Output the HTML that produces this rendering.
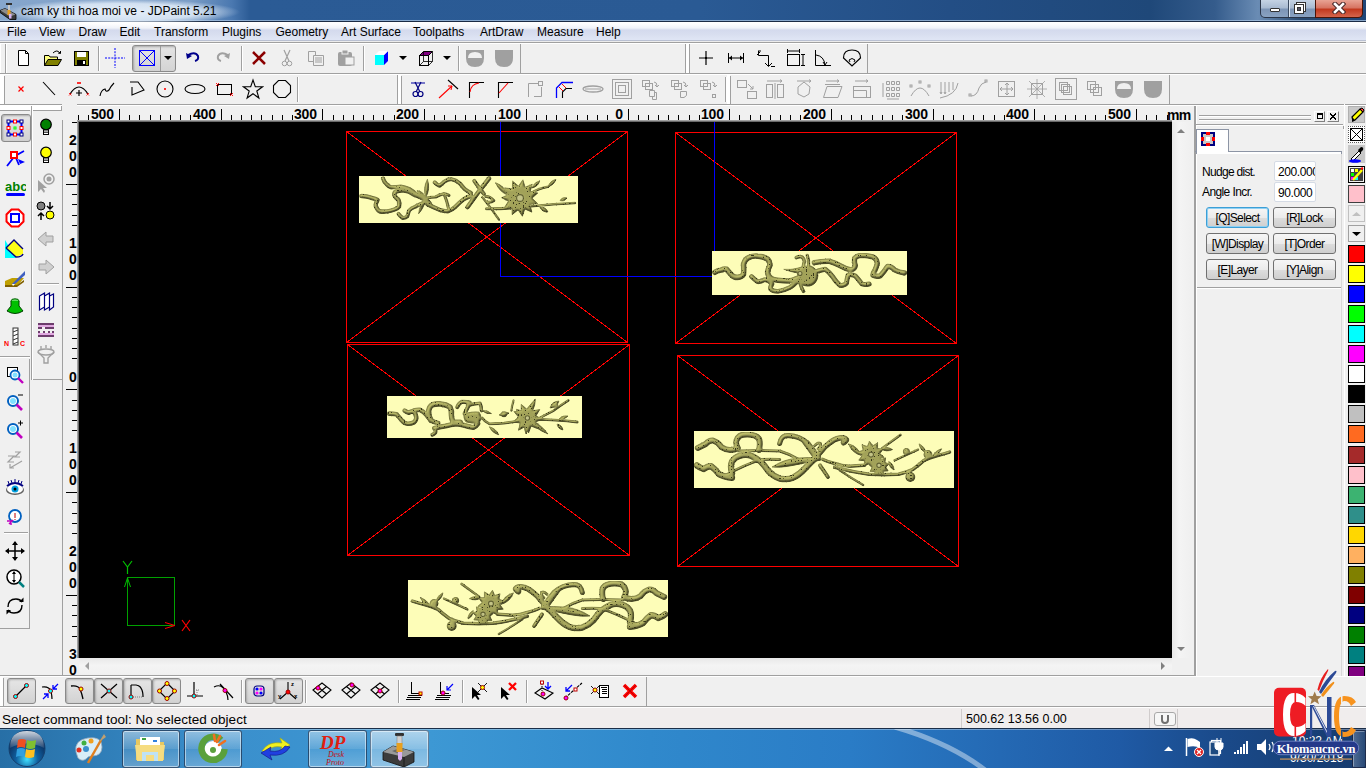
<!DOCTYPE html><html><head><meta charset="utf-8"><style>
html,body{margin:0;padding:0;width:1366px;height:768px;overflow:hidden;background:#f0f0f0;}
body{position:relative;font-family:"Liberation Sans", sans-serif;}
div,svg{box-sizing:border-box;}
</style></head><body>
<div style="position:absolute;left:0px;top:0px;width:1366px;height:22px;background:linear-gradient(90deg,#86a6cc 0px,#7b9dc6 190px,#4a78b0 232px,#2b5b95 250px,#2a5a94 700px,#234e85 950px,#1f4879 1150px,#355c8c 1215px,#6a8cb4 1258px,#2a4a70 1300px,#1f4678 1366px);"></div>
<div style="position:absolute;left:0px;top:20px;width:1366px;height:1px;background:rgba(170,196,226,0.75);"></div>
<div style="position:absolute;left:0px;top:21px;width:1366px;height:1px;background:#1b2b45;"></div>
<div style="position:absolute;left:0px;top:0px;width:250px;height:22px;background:radial-gradient(ellipse 118px 13px at 122px 12px,rgba(238,245,252,0.92) 0%,rgba(225,236,248,0.85) 65%,rgba(190,212,236,0) 100%);"></div>
<div style="position:absolute;left:21px;top:5px;font-size:12px;line-height:1;color:#000;white-space:nowrap;">cam ky thi hoa moi ve - JDPaint 5.21</div>
<div style="position:absolute;left:1260px;top:0px;width:103px;height:18px;border:1px solid #2a3548;border-top:none;border-radius:0 0 5px 5px;background:linear-gradient(#c5d3e4 0%,#a9bbd2 45%,#7d95b6 55%,#8aa3c2 100%);"></div>
<div style="position:absolute;left:1315px;top:0px;width:48px;height:18px;border:1px solid #4a1408;border-top:none;border-radius:0 0 5px 0;background:linear-gradient(#e8a394 0%,#d77563 45%,#c2391f 55%,#d5654c 100%);"></div>
<div style="position:absolute;left:1288px;top:0px;width:1px;height:17px;background:#3a4a60;"></div>
<div style="position:absolute;left:1289px;top:0px;width:1px;height:17px;background:#dfe8f3;"></div>
<div style="position:absolute;left:1270px;top:8px;width:10px;height:4px;background:#fff;border:1px solid #333;border-radius:1px;"></div>
<div style="position:absolute;left:1296px;top:2px;width:10px;height:10px;background:#fff;border:1px solid #333;"></div>
<div style="position:absolute;left:1294px;top:4px;width:10px;height:10px;background:#fff;border:1px solid #333;"></div>
<div style="position:absolute;left:1297px;top:7px;width:4px;height:4px;background:#556;border:1px solid #333;"></div>
<svg style="position:absolute;left:1332px;top:2px;" width="14" height="12" viewBox="0 0 14 12"><path d="M3 2 L11 10 M11 2 L3 10" stroke="#4a2a2a" stroke-width="4.6" stroke-linecap="square"/><path d="M3 2 L11 10 M11 2 L3 10" stroke="#fff" stroke-width="2.6" stroke-linecap="square"/></svg>
<svg style="position:absolute;left:0px;top:2px;" width="18" height="18" viewBox="0 0 18 18"><path d="M0 8.5 L5 6.5 L16 12.5 L16 17.5 L10 17.5 L0 10.5 Z" fill="#3a3a3a" stroke="#000" stroke-width="0.8"/><path d="M0.5 8.5 L5 6.5 L15.5 12.5 L10 14.5 Z" fill="#8c8c8c"/><rect x="6" y="1" width="6" height="2" fill="#303030"/><rect x="8" y="3" width="2" height="6" fill="#c8c8c8"/><rect x="7.5" y="8" width="3" height="5" fill="#e8a020"/><rect x="9" y="12" width="2.5" height="4.5" fill="#d8b4f4"/></svg>
<div style="position:absolute;left:0px;top:22px;width:1366px;height:18px;background:linear-gradient(#ffffff 0px,#fdfdfe 2px,#f0f3f9 6px,#d4daed 8px,#d8deef 12px,#e0e6f5 18px);"></div>
<div style="position:absolute;left:0px;top:40px;width:1366px;height:1px;background:#b9c0d2;"></div>
<div style="position:absolute;left:0px;top:41px;width:1366px;height:1px;background:#ececec;"></div>
<div style="position:absolute;left:0px;top:42px;width:1366px;height:1px;background:#a0a0a0;"></div>
<div style="position:absolute;left:0px;top:43px;width:1366px;height:1px;background:#ffffff;"></div>
<div style="position:absolute;left:7px;top:26px;font-size:12px;line-height:1;color:#000;white-space:nowrap;">File</div>
<div style="position:absolute;left:39px;top:26px;font-size:12px;line-height:1;color:#000;white-space:nowrap;">View</div>
<div style="position:absolute;left:78.5px;top:26px;font-size:12px;line-height:1;color:#000;white-space:nowrap;">Draw</div>
<div style="position:absolute;left:119.5px;top:26px;font-size:12px;line-height:1;color:#000;white-space:nowrap;">Edit</div>
<div style="position:absolute;left:154px;top:26px;font-size:12px;line-height:1;color:#000;white-space:nowrap;">Transform</div>
<div style="position:absolute;left:222px;top:26px;font-size:12px;line-height:1;color:#000;white-space:nowrap;">Plugins</div>
<div style="position:absolute;left:275.5px;top:26px;font-size:12px;line-height:1;color:#000;white-space:nowrap;">Geometry</div>
<div style="position:absolute;left:341px;top:26px;font-size:12px;line-height:1;color:#000;white-space:nowrap;">Art Surface</div>
<div style="position:absolute;left:413px;top:26px;font-size:12px;line-height:1;color:#000;white-space:nowrap;">Toolpaths</div>
<div style="position:absolute;left:480px;top:26px;font-size:12px;line-height:1;color:#000;white-space:nowrap;">ArtDraw</div>
<div style="position:absolute;left:537px;top:26px;font-size:12px;line-height:1;color:#000;white-space:nowrap;">Measure</div>
<div style="position:absolute;left:596px;top:26px;font-size:12px;line-height:1;color:#000;white-space:nowrap;">Help</div>
<div style="position:absolute;left:0px;top:73px;width:1366px;height:1px;background:#a0a0a0;"></div><div style="position:absolute;left:0px;top:74px;width:1366px;height:1px;background:#fff;"></div>
<div style="position:absolute;left:77px;top:104px;width:1289px;height:1px;background:#a0a0a0;"></div><div style="position:absolute;left:77px;top:105px;width:1289px;height:1px;background:#fff;"></div>
<div style="position:absolute;left:0px;top:43px;width:1px;height:30px;background:#fff;"></div>
<div style="position:absolute;left:5px;top:44px;width:1px;height:29px;background:#a0a0a0;"></div>
<div style="position:absolute;left:6px;top:44px;width:1px;height:29px;background:#fff;"></div>
<div style="position:absolute;left:0px;top:75px;width:4px;height:29px;background:#fff;"></div>
<div style="position:absolute;left:4px;top:76px;width:1px;height:28px;background:#a0a0a0;"></div>
<div style="position:absolute;left:98px;top:46px;width:1px;height:25px;background:#a0a0a0;"></div><div style="position:absolute;left:99px;top:46px;width:1px;height:25px;background:#fff;"></div>
<div style="position:absolute;left:241px;top:46px;width:1px;height:25px;background:#a0a0a0;"></div><div style="position:absolute;left:242px;top:46px;width:1px;height:25px;background:#fff;"></div>
<div style="position:absolute;left:363px;top:46px;width:1px;height:25px;background:#a0a0a0;"></div><div style="position:absolute;left:364px;top:46px;width:1px;height:25px;background:#fff;"></div>
<div style="position:absolute;left:458px;top:46px;width:1px;height:25px;background:#a0a0a0;"></div><div style="position:absolute;left:459px;top:46px;width:1px;height:25px;background:#fff;"></div>
<div style="position:absolute;left:520px;top:44px;width:1px;height:29px;background:#a0a0a0;"></div>
<div style="position:absolute;left:685px;top:44px;width:1px;height:29px;background:#a0a0a0;"></div>
<div style="position:absolute;left:686px;top:44px;width:3px;height:29px;background:#fff;"></div>
<div style="position:absolute;left:689px;top:44px;width:1px;height:29px;background:#a0a0a0;"></div>
<div style="position:absolute;left:867px;top:44px;width:1px;height:29px;background:#a0a0a0;"></div>
<div style="position:absolute;left:297px;top:77px;width:1px;height:25px;background:#a0a0a0;"></div><div style="position:absolute;left:298px;top:77px;width:1px;height:25px;background:#fff;"></div>
<div style="position:absolute;left:397px;top:75px;width:1px;height:29px;background:#a0a0a0;"></div>
<div style="position:absolute;left:398px;top:75px;width:3px;height:29px;background:#fff;"></div>
<div style="position:absolute;left:401px;top:76px;width:1px;height:28px;background:#a0a0a0;"></div>
<div style="position:absolute;left:725px;top:77px;width:1px;height:25px;background:#a0a0a0;"></div><div style="position:absolute;left:726px;top:77px;width:1px;height:25px;background:#fff;"></div>
<div style="position:absolute;left:727px;top:75px;width:3px;height:29px;background:#fff;"></div>
<div style="position:absolute;left:730px;top:76px;width:1px;height:28px;background:#a0a0a0;"></div>
<div style="position:absolute;left:1169px;top:75px;width:1px;height:29px;background:#a0a0a0;"></div>
<div style="position:absolute;left:132px;top:45px;width:44px;height:27px;border:1px solid #8a8a8a;border-radius:3px;background:linear-gradient(#e4e4e4,#d4d4d4);box-shadow:inset 1px 1px 2px rgba(0,0,0,0.25);"></div>
<div style="position:absolute;left:160px;top:46px;width:1px;height:25px;background:#9a9a9a;"></div>
<svg style="position:absolute;left:12px;top:47px;" width="22" height="22" viewBox="0 0 22 22"><path d="M6.5 3.5 H13.5 L16.5 6.5 V18.5 H6.5 Z" fill="#fff" stroke="#000"/><path d="M13.5 3.5 V6.5 H16.5" fill="none" stroke="#000"/></svg>
<svg style="position:absolute;left:42px;top:47px;" width="22" height="22" viewBox="0 0 22 22"><path d="M2.5 8.5 H7 L8 10 H15.5 V18.5 H2.5 Z" fill="#ffff80" stroke="#000"/><path d="M2.5 18.5 L6 12.5 H19.5 L16 18.5 Z" fill="#808000" stroke="#000"/><path d="M11 6 Q15 2 18 6" fill="none" stroke="#000"/><path d="M16 6 L18.5 6.5 L18.5 4" fill="none" stroke="#000"/></svg>
<svg style="position:absolute;left:70px;top:47px;" width="22" height="22" viewBox="0 0 22 22"><rect x="4.5" y="4.5" width="14" height="14" fill="#808000" stroke="#000"/><rect x="7" y="5" width="9" height="5" fill="#fff"/><rect x="7" y="13" width="9" height="5" fill="#000"/><rect x="13" y="14" width="2" height="3" fill="#fff"/></svg>
<svg style="position:absolute;left:104px;top:47px;" width="22" height="22" viewBox="0 0 22 22"><path d="M11 1 V21 M1 11 H21" stroke="#0000ff" stroke-dasharray="2 1.2" fill="none"/></svg>
<svg style="position:absolute;left:136px;top:47px;" width="22" height="22" viewBox="0 0 22 22"><rect x="3.5" y="3.5" width="15" height="15" fill="none" stroke="#0000ff"/><path d="M3.5 3.5 L18.5 18.5 M18.5 3.5 L3.5 18.5" stroke="#0000ff"/></svg>
<svg style="position:absolute;left:157px;top:47px;" width="22" height="22" viewBox="0 0 22 22"><path d="M7 9 H15 L11 13 Z" fill="#000"/></svg>
<svg style="position:absolute;left:182px;top:47px;" width="22" height="22" viewBox="0 0 22 22"><path d="M6 8 Q13 4 16 9 Q17 13 13 14" fill="none" stroke="#00008b" stroke-width="2"/><path d="M4 6 L5 12 L10 9 Z" fill="#00008b"/></svg>
<svg style="position:absolute;left:212px;top:47px;" width="22" height="22" viewBox="0 0 22 22"><path d="M16 8 Q9 4 6 9 Q5 13 9 14" fill="none" stroke="#a0a0a0" stroke-width="2"/><path d="M18 6 L17 12 L12 9 Z" fill="#a0a0a0"/></svg>
<svg style="position:absolute;left:248px;top:47px;" width="22" height="22" viewBox="0 0 22 22"><path d="M5 5 L17 17 M17 5 L5 17" stroke="#8b0000" stroke-width="2.5"/></svg>
<svg style="position:absolute;left:276px;top:47px;" width="22" height="22" viewBox="0 0 22 22"><path d="M8 3 L13 14 M14 3 L9 14" stroke="#a0a0a0" stroke-width="1.2"/><circle cx="8.5" cy="16.5" r="2.3" fill="none" stroke="#a0a0a0"/><circle cx="13.5" cy="16.5" r="2.3" fill="none" stroke="#a0a0a0"/></svg>
<svg style="position:absolute;left:305px;top:47px;" width="22" height="22" viewBox="0 0 22 22"><path d="M3.5 4.5 H10.5 V14.5 H3.5 Z" fill="none" stroke="#a0a0a0"/><path d="M8.5 8.5 H18.5 V18.5 H8.5 Z" fill="#f0f0f0" stroke="#a0a0a0"/><path d="M10 11 H17 M10 13 H17 M10 15 H17" stroke="#a0a0a0"/></svg>
<svg style="position:absolute;left:335px;top:47px;" width="22" height="22" viewBox="0 0 22 22"><rect x="3" y="5" width="14" height="14" rx="2" fill="#a0a0a0"/><rect x="7" y="3" width="6" height="4" fill="#a0a0a0" stroke="#f0f0f0"/><rect x="10" y="10" width="9" height="8" fill="#f0f0f0" stroke="#a0a0a0"/></svg>
<svg style="position:absolute;left:371px;top:47px;" width="22" height="22" viewBox="0 0 22 22"><path d="M4 8 H13 V18 H4 Z" fill="#00ffff"/><path d="M13 8 L17 4 V14 L13 18 Z" fill="#0000ff"/><path d="M4 8 L8 4 H17 L13 8 Z" fill="#ffffff"/></svg>
<svg style="position:absolute;left:392px;top:47px;" width="22" height="22" viewBox="0 0 22 22"><path d="M7 9 H15 L11 13 Z" fill="#000"/></svg>
<svg style="position:absolute;left:414px;top:47px;" width="22" height="22" viewBox="0 0 22 22"><path d="M5.5 8.5 L9.5 4.5 H18.5 L14.5 8.5 Z" fill="#800080" stroke="#000"/><rect x="5.5" y="8.5" width="9" height="10" fill="none" stroke="#000"/><path d="M14.5 18.5 L18.5 14.5 V4.5 M9.5 4.5 V14.5 H18.5 M9.5 14.5 L5.5 18.5" fill="none" stroke="#000" stroke-width="0.8"/></svg>
<svg style="position:absolute;left:436px;top:47px;" width="22" height="22" viewBox="0 0 22 22"><path d="M7 9 H15 L11 13 Z" fill="#000"/></svg>
<svg style="position:absolute;left:464px;top:47px;" width="22" height="22" viewBox="0 0 22 22"><path d="M2 3 H20 V11 Q20 20 11 20 Q2 20 2 11 Z" fill="#a0a0a0"/><path d="M4 11 Q4 5 11 5 Q18 5 18 11 Z" fill="#f0f0f0"/></svg>
<svg style="position:absolute;left:493px;top:47px;" width="22" height="22" viewBox="0 0 22 22"><path d="M2 3 H20 V11 Q20 20 11 20 Q2 20 2 11 Z" fill="#a0a0a0"/></svg>
<svg style="position:absolute;left:695px;top:47px;" width="22" height="22" viewBox="0 0 22 22"><path d="M11 4 V18 M4 11 H18" stroke="#000" stroke-width="1.2"/><rect x="10" y="10" width="2" height="2" fill="#000"/></svg>
<svg style="position:absolute;left:725px;top:47px;" width="22" height="22" viewBox="0 0 22 22"><path d="M3.5 6 V16 M18.5 6 V16 M4 11 H18" stroke="#000"/><path d="M4 11 L7 8.5 V13.5 Z M18 11 L15 8.5 V13.5 Z" fill="#000"/></svg>
<svg style="position:absolute;left:755px;top:47px;" width="22" height="22" viewBox="0 0 22 22"><path d="M3.5 4 V8.5 H13.5 V19 M10 16 L13.5 19.5 L17 16 M3 4 H6 M16 19.5 H20" fill="none" stroke="#000"/><path d="M2 8 L5 5" stroke="#000"/></svg>
<svg style="position:absolute;left:784px;top:47px;" width="22" height="22" viewBox="0 0 22 22"><rect x="3.5" y="7.5" width="12" height="11" fill="none" stroke="#000"/><path d="M3.5 2 V6 M15.5 2 V6 M3.5 4 H15.5 M17 7.5 H21 M17 18.5 H21 M19 7.5 V18.5" fill="none" stroke="#000"/></svg>
<svg style="position:absolute;left:811px;top:47px;" width="22" height="22" viewBox="0 0 22 22"><path d="M4.5 3 V18.5 H20" fill="none" stroke="#000"/><path d="M5 8 Q13 9 14 18" fill="none" stroke="#000"/><path d="M12 15 L14 18 L16 15" fill="none" stroke="#000"/></svg>
<svg style="position:absolute;left:841px;top:47px;" width="22" height="22" viewBox="0 0 22 22"><path d="M2.5 11 Q2.5 3 11 3 Q19.5 3 19.5 11 L11 19 Z" fill="none" stroke="#000" stroke-width="1.2"/><path d="M8 13 Q11 10 14 13 M8 13 L9 15 M14 13 L13 15" fill="none" stroke="#000"/></svg>
<svg style="position:absolute;left:10px;top:78px;" width="22" height="22" viewBox="0 0 22 22"><path d="M8.5 8.5 L13.5 13.5 M13.5 8.5 L8.5 13.5" stroke="#ff0000" stroke-width="1.2"/></svg>
<svg style="position:absolute;left:38px;top:78px;" width="22" height="22" viewBox="0 0 22 22"><path d="M5 4 L17 17" stroke="#000" stroke-width="1.1"/></svg>
<svg style="position:absolute;left:68px;top:78px;" width="22" height="22" viewBox="0 0 22 22"><path d="M2 16 Q11 2 20 16" fill="none" stroke="#000" stroke-width="1.1"/><path d="M11 12 V18 M8 15 H14" stroke="#000" stroke-width="1.2"/><path d="M1 15 L3.5 17.5 M3.5 15 L1 17.5 M18.5 15 L21 17.5 M21 15 L18.5 17.5 M9 4 L11 6 M11 4 L9 6 M11 4 L13 6 M13 4 L11 6" stroke="#ff0000" stroke-width="0.8"/></svg>
<svg style="position:absolute;left:96px;top:78px;" width="22" height="22" viewBox="0 0 22 22"><path d="M4 18 Q5 12 9 11 Q10 15 13 12 Q15 8 18 5" fill="none" stroke="#000" stroke-width="1.1"/></svg>
<svg style="position:absolute;left:126px;top:78px;" width="22" height="22" viewBox="0 0 22 22"><path d="M4 4 H12 L18 12 L6 17 V9" fill="none" stroke="#000" stroke-width="1.1"/></svg>
<svg style="position:absolute;left:154px;top:78px;" width="22" height="22" viewBox="0 0 22 22"><circle cx="11" cy="11" r="8" fill="none" stroke="#000" stroke-width="1.1"/><path d="M10 10 L12 12 M12 10 L10 12" stroke="#ff0000" stroke-width="0.8"/></svg>
<svg style="position:absolute;left:184px;top:78px;" width="22" height="22" viewBox="0 0 22 22"><ellipse cx="11" cy="11" rx="10" ry="4.5" fill="none" stroke="#000" stroke-width="1.1"/></svg>
<svg style="position:absolute;left:214px;top:78px;" width="22" height="22" viewBox="0 0 22 22"><rect x="3.5" y="6.5" width="14" height="10" fill="none" stroke="#000"/><path d="M2 5 L5 8 M5 5 L2 8 M16 15 L19 18 M19 15 L16 18" stroke="#ff0000" stroke-width="0.9"/></svg>
<svg style="position:absolute;left:242px;top:78px;" width="22" height="22" viewBox="0 0 22 22"><path d="M11 2 L13.3 8.6 L20.5 8.8 L14.8 13 L16.9 20 L11 15.8 L5.1 20 L7.2 13 L1.5 8.8 L8.7 8.6 Z" fill="none" stroke="#000" stroke-width="1.1"/></svg>
<svg style="position:absolute;left:271px;top:78px;" width="22" height="22" viewBox="0 0 22 22"><path d="M7.5 2.5 H14.5 L19.5 7.5 V14.5 L14.5 19.5 H7.5 L2.5 14.5 V7.5 Z" fill="none" stroke="#000" stroke-width="1.1"/></svg>
<svg style="position:absolute;left:407px;top:78px;" width="22" height="22" viewBox="0 0 22 22"><path d="M4 5 H18" stroke="#0000a0"/><path d="M8 4 L13 14 M14 4 L9 14" stroke="#000080" stroke-width="1.2"/><circle cx="8.5" cy="16" r="2.5" fill="none" stroke="#000080" stroke-width="1.2"/><circle cx="13.5" cy="16" r="2.5" fill="none" stroke="#000080" stroke-width="1.2"/></svg>
<svg style="position:absolute;left:437px;top:78px;" width="22" height="22" viewBox="0 0 22 22"><path d="M11 2 L21 11" stroke="#000" stroke-width="1.1"/><path d="M2 20 L15 8" stroke="#ff0000" stroke-width="1.1"/><path d="M11 8 L15 8 L14 12" fill="none" stroke="#ff0000"/></svg>
<svg style="position:absolute;left:466px;top:78px;" width="22" height="22" viewBox="0 0 22 22"><path d="M3.5 20 V4.5 H18" fill="none" stroke="#000" stroke-width="1.1"/><path d="M4 14 Q5 6 13 5" fill="none" stroke="#ff0000" stroke-width="1.1"/></svg>
<svg style="position:absolute;left:495px;top:78px;" width="22" height="22" viewBox="0 0 22 22"><path d="M3.5 20 V4.5 H18" fill="none" stroke="#000" stroke-width="1.1"/><path d="M4 15 L13 5" fill="none" stroke="#ff0000" stroke-width="1.1"/></svg>
<svg style="position:absolute;left:525px;top:78px;" width="22" height="22" viewBox="0 0 22 22"><path d="M3.5 19 V5.5 H13 M16.5 9 V18.5 H9" fill="none" stroke="#a0a0a0"/><rect x="13.5" y="3.5" width="4" height="4" fill="none" stroke="#a0a0a0"/></svg>
<svg style="position:absolute;left:554px;top:78px;" width="22" height="22" viewBox="0 0 22 22"><path d="M2.5 20 V10 L8 4.5 H19" fill="none" stroke="#0000ff" stroke-width="1.3"/><path d="M8.5 20 V14 L12 10.5 H18" fill="none" stroke="#000" stroke-width="1.1"/><path d="M5 9 L9 13 M8 6 L12 10" stroke="#ff0000"/></svg>
<svg style="position:absolute;left:582px;top:78px;" width="22" height="22" viewBox="0 0 22 22"><ellipse cx="11" cy="11" rx="10" ry="3" fill="none" stroke="#a0a0a0" stroke-width="1.3"/><path d="M3 11 H19" stroke="#a0a0a0"/></svg>
<svg style="position:absolute;left:611px;top:78px;" width="22" height="22" viewBox="0 0 22 22"><rect x="1.5" y="1.5" width="19" height="19" fill="none" stroke="#a0a0a0"/><rect x="4.5" y="4.5" width="13" height="13" fill="none" stroke="#a0a0a0"/><rect x="7.5" y="7.5" width="7" height="7" fill="none" stroke="#a0a0a0"/></svg>
<svg style="position:absolute;left:640px;top:78px;" width="22" height="22" viewBox="0 0 22 22"><rect x="2.5" y="2.5" width="7" height="6" fill="none" stroke="#a0a0a0"/><rect x="5.5" y="5.5" width="7" height="6" fill="none" stroke="#a0a0a0"/><path d="M14 4 Q17 4 17 8 M15 7 L17 9 L19 7" fill="none" stroke="#a0a0a0"/><path d="M12.5 14.5 H16.5 V21.5 H12.5 Z" fill="none" stroke="#a0a0a0"/><path d="M9.5 12.5 H14.5 V18.5 H9.5 Z" fill="#f0f0f0" stroke="#a0a0a0"/></svg>
<svg style="position:absolute;left:669px;top:78px;" width="22" height="22" viewBox="0 0 22 22"><rect x="2.5" y="2.5" width="7" height="6" fill="none" stroke="#a0a0a0"/><rect x="5.5" y="5.5" width="7" height="6" fill="none" stroke="#a0a0a0"/><path d="M14 4 Q17 4 17 8 M15 7 L17 9 L19 7" fill="none" stroke="#a0a0a0"/><path d="M11.5 13.5 H17.5 V17.5 L15 19.5 H11.5 Z" fill="none" stroke="#a0a0a0"/></svg>
<svg style="position:absolute;left:698px;top:78px;" width="22" height="22" viewBox="0 0 22 22"><rect x="2.5" y="2.5" width="7" height="6" fill="none" stroke="#a0a0a0"/><rect x="5.5" y="5.5" width="7" height="6" fill="none" stroke="#a0a0a0"/><path d="M14 4 Q17 4 17 8 M15 7 L17 9 L19 7" fill="none" stroke="#a0a0a0"/><rect x="14.5" y="16.5" width="3" height="3" fill="none" stroke="#a0a0a0"/></svg>
<svg style="position:absolute;left:735px;top:78px;" width="22" height="22" viewBox="0 0 22 22"><rect x="2.5" y="2.5" width="9" height="7" fill="none" stroke="#a0a0a0"/><rect x="12.5" y="13.5" width="9" height="7" fill="none" stroke="#a0a0a0"/><path d="M13 6 L18 11 M18 8 V11 H15" fill="none" stroke="#a0a0a0"/></svg>
<svg style="position:absolute;left:764px;top:78px;" width="22" height="22" viewBox="0 0 22 22"><rect x="2.5" y="6.5" width="6" height="13" fill="none" stroke="#a0a0a0"/><rect x="13.5" y="6.5" width="6" height="13" fill="none" stroke="#a0a0a0"/><path d="M11 5 V21 M3 3 H18 M16 1.5 L18 3 L16 4.5" fill="none" stroke="#a0a0a0"/></svg>
<svg style="position:absolute;left:793px;top:78px;" width="22" height="22" viewBox="0 0 22 22"><path d="M11 4 L17 9 L16 16 L11 19 L5 16 L5 9 Z" fill="none" stroke="#a0a0a0"/><path d="M4 3 H18 M16 1.5 L18 3 L16 4.5" fill="none" stroke="#a0a0a0"/></svg>
<svg style="position:absolute;left:822px;top:78px;" width="22" height="22" viewBox="0 0 22 22"><path d="M5 8.5 H20 L16 19.5 H1.5 Z" fill="none" stroke="#a0a0a0"/><path d="M3 6.5 L18 6.5" stroke="#a0a0a0"/><path d="M4 3 H17 M15 1.5 L17 3 L15 4.5" fill="none" stroke="#a0a0a0"/></svg>
<svg style="position:absolute;left:851px;top:78px;" width="22" height="22" viewBox="0 0 22 22"><rect x="2.5" y="8.5" width="17" height="11" fill="none" stroke="#a0a0a0"/><path d="M2.5 12.5 H15.5 V19" fill="none" stroke="#a0a0a0"/><path d="M4 3 H17 M15 1.5 L17 3 L15 4.5" fill="none" stroke="#a0a0a0"/></svg>
<svg style="position:absolute;left:880px;top:78px;" width="22" height="22" viewBox="0 0 22 22"><path d="M6.5 3.5 h3 v3 h-3z M11.5 3.5 h3 v3 h-3z M16.5 3.5 h3 v3 h-3z M6.5 9.5 h3 v3 h-3z M11.5 9.5 h3 v3 h-3z M16.5 9.5 h3 v3 h-3z M6.5 15.5 h3 v3 h-3z M11.5 15.5 h3 v3 h-3z M16.5 15.5 h3 v3 h-3z M3 5 V19 M7 21 H19" fill="none" stroke="#a0a0a0"/></svg>
<svg style="position:absolute;left:909px;top:78px;" width="22" height="22" viewBox="0 0 22 22"><path d="M2 18 Q11 2 20 18" fill="none" stroke="#a0a0a0"/><rect x="1" y="7" width="2" height="2" fill="none" stroke="#a0a0a0"/><rect x="10" y="3" width="2" height="2" fill="none" stroke="#a0a0a0"/><rect x="19" y="7" width="2" height="2" fill="none" stroke="#a0a0a0"/></svg>
<svg style="position:absolute;left:938px;top:78px;" width="22" height="22" viewBox="0 0 22 22"><path d="M3 4 V15 M7 4 V15 M11 4 V14 M15 4 V12 M2 14 L3 16 L4 14 M6 14 L7 16 L8 14 M2 20 Q18 17 20 5" fill="none" stroke="#a0a0a0"/></svg>
<svg style="position:absolute;left:967px;top:78px;" width="22" height="22" viewBox="0 0 22 22"><path d="M4 18 Q10 18 12 10 Q14 5 19 4" fill="none" stroke="#a0a0a0"/><rect x="2" y="16" width="2" height="2" fill="none" stroke="#a0a0a0"/><rect x="18" y="2" width="2" height="2" fill="none" stroke="#a0a0a0"/></svg>
<svg style="position:absolute;left:996px;top:78px;" width="22" height="22" viewBox="0 0 22 22"><rect x="2.5" y="3.5" width="16" height="15" fill="none" stroke="#a0a0a0"/><path d="M11 5 V17 M4 11 H17 M9 7 L11 5 L13 7 M9 15 L11 17 L13 15 M6 9 L4 11 L6 13 M15 9 L17 11 L15 13" fill="none" stroke="#a0a0a0"/></svg>
<svg style="position:absolute;left:1026px;top:78px;" width="22" height="22" viewBox="0 0 22 22"><rect x="5.5" y="5.5" width="11" height="11" fill="none" stroke="#a0a0a0"/><path d="M11 1 V21 M1 11 H21 M3 3 L19 19 M19 3 L3 19" fill="none" stroke="#a0a0a0" stroke-width="0.8"/></svg>
<svg style="position:absolute;left:1055px;top:78px;" width="22" height="22" viewBox="0 0 22 22"><rect x="0.5" y="0.5" width="21" height="21" fill="none" stroke="#a0a0a0"/><rect x="4.5" y="4.5" width="8" height="8" fill="none" stroke="#a0a0a0"/><rect x="8.5" y="8.5" width="8" height="8" fill="none" stroke="#a0a0a0"/><rect x="6.5" y="6.5" width="8" height="8" fill="none" stroke="#a0a0a0"/></svg>
<svg style="position:absolute;left:1084px;top:78px;" width="22" height="22" viewBox="0 0 22 22"><rect x="3.5" y="3.5" width="8" height="8" fill="none" stroke="#a0a0a0"/><rect x="9.5" y="9.5" width="8" height="8" fill="none" stroke="#a0a0a0"/><rect x="6.5" y="6.5" width="8" height="8" fill="none" stroke="#a0a0a0"/></svg>
<svg style="position:absolute;left:1113px;top:78px;" width="22" height="22" viewBox="0 0 22 22"><path d="M2 3 H20 V11 Q20 20 11 20 Q2 20 2 11 Z" fill="#a0a0a0"/><path d="M4 11 Q4 5 11 5 Q18 5 18 11 Z" fill="#f0f0f0"/></svg>
<svg style="position:absolute;left:1142px;top:78px;" width="22" height="22" viewBox="0 0 22 22"><path d="M2 3 H20 V11 Q20 20 11 20 Q2 20 2 11 Z" fill="#a0a0a0"/></svg>
<div style="position:absolute;left:0px;top:104px;width:62px;height:1px;background:#a0a0a0;"></div>
<div style="position:absolute;left:0px;top:105px;width:62px;height:5px;background:#fff;"></div>
<div style="position:absolute;left:77px;top:104px;width:1118px;height:1px;background:#a0a0a0;"></div>
<div style="position:absolute;left:77px;top:105px;width:1118px;height:1px;background:#fff;"></div>
<div style="position:absolute;left:0px;top:110px;width:30px;height:1px;background:#a0a0a0;"></div>
<div style="position:absolute;left:33px;top:110px;width:29px;height:1px;background:#a0a0a0;"></div>
<div style="position:absolute;left:61px;top:106px;width:1px;height:5px;background:#a0a0a0;"></div>
<div style="position:absolute;left:31px;top:106px;width:1px;height:522px;background:#a0a0a0;"></div>
<div style="position:absolute;left:32px;top:106px;width:1px;height:522px;background:#fff;"></div>
<div style="position:absolute;left:62px;top:120px;width:1px;height:556px;background:#a0a0a0;"></div>
<svg style="position:absolute;left:0;top:0" width="1366" height="130" shape-rendering="crispEdges"><rect x="78" y="115" width="1" height="5" fill="#000"/><rect x="88" y="115" width="1" height="5" fill="#000"/><rect x="119" y="109" width="1" height="11" fill="#000"/><rect x="129" y="115" width="1" height="5" fill="#000"/><rect x="139" y="115" width="1" height="5" fill="#000"/><rect x="150" y="115" width="1" height="5" fill="#000"/><rect x="160" y="115" width="1" height="5" fill="#000"/><rect x="170" y="115" width="1" height="5" fill="#000"/><rect x="180" y="115" width="1" height="5" fill="#000"/><rect x="190" y="115" width="1" height="5" fill="#000"/><rect x="221" y="109" width="1" height="11" fill="#000"/><rect x="231" y="115" width="1" height="5" fill="#000"/><rect x="241" y="115" width="1" height="5" fill="#000"/><rect x="251" y="115" width="1" height="5" fill="#000"/><rect x="261" y="115" width="1" height="5" fill="#000"/><rect x="272" y="115" width="1" height="5" fill="#000"/><rect x="282" y="115" width="1" height="5" fill="#000"/><rect x="292" y="115" width="1" height="5" fill="#000"/><rect x="322" y="109" width="1" height="11" fill="#000"/><rect x="333" y="115" width="1" height="5" fill="#000"/><rect x="343" y="115" width="1" height="5" fill="#000"/><rect x="353" y="115" width="1" height="5" fill="#000"/><rect x="363" y="115" width="1" height="5" fill="#000"/><rect x="373" y="115" width="1" height="5" fill="#000"/><rect x="383" y="115" width="1" height="5" fill="#000"/><rect x="394" y="115" width="1" height="5" fill="#000"/><rect x="424" y="109" width="1" height="11" fill="#000"/><rect x="434" y="115" width="1" height="5" fill="#000"/><rect x="444" y="115" width="1" height="5" fill="#000"/><rect x="455" y="115" width="1" height="5" fill="#000"/><rect x="465" y="115" width="1" height="5" fill="#000"/><rect x="475" y="115" width="1" height="5" fill="#000"/><rect x="485" y="115" width="1" height="5" fill="#000"/><rect x="495" y="115" width="1" height="5" fill="#000"/><rect x="526" y="109" width="1" height="11" fill="#000"/><rect x="536" y="115" width="1" height="5" fill="#000"/><rect x="546" y="115" width="1" height="5" fill="#000"/><rect x="556" y="115" width="1" height="5" fill="#000"/><rect x="566" y="115" width="1" height="5" fill="#000"/><rect x="577" y="115" width="1" height="5" fill="#000"/><rect x="587" y="115" width="1" height="5" fill="#000"/><rect x="597" y="115" width="1" height="5" fill="#000"/><rect x="607" y="115" width="1" height="5" fill="#000"/><rect x="628" y="109" width="1" height="11" fill="#000"/><rect x="638" y="115" width="1" height="5" fill="#000"/><rect x="648" y="115" width="1" height="5" fill="#000"/><rect x="658" y="115" width="1" height="5" fill="#000"/><rect x="668" y="115" width="1" height="5" fill="#000"/><rect x="678" y="115" width="1" height="5" fill="#000"/><rect x="689" y="115" width="1" height="5" fill="#000"/><rect x="699" y="115" width="1" height="5" fill="#000"/><rect x="729" y="109" width="1" height="11" fill="#000"/><rect x="739" y="115" width="1" height="5" fill="#000"/><rect x="750" y="115" width="1" height="5" fill="#000"/><rect x="760" y="115" width="1" height="5" fill="#000"/><rect x="770" y="115" width="1" height="5" fill="#000"/><rect x="780" y="115" width="1" height="5" fill="#000"/><rect x="790" y="115" width="1" height="5" fill="#000"/><rect x="800" y="115" width="1" height="5" fill="#000"/><rect x="831" y="109" width="1" height="11" fill="#000"/><rect x="841" y="115" width="1" height="5" fill="#000"/><rect x="851" y="115" width="1" height="5" fill="#000"/><rect x="861" y="115" width="1" height="5" fill="#000"/><rect x="872" y="115" width="1" height="5" fill="#000"/><rect x="882" y="115" width="1" height="5" fill="#000"/><rect x="892" y="115" width="1" height="5" fill="#000"/><rect x="902" y="115" width="1" height="5" fill="#000"/><rect x="933" y="109" width="1" height="11" fill="#000"/><rect x="943" y="115" width="1" height="5" fill="#000"/><rect x="953" y="115" width="1" height="5" fill="#000"/><rect x="963" y="115" width="1" height="5" fill="#000"/><rect x="973" y="115" width="1" height="5" fill="#000"/><rect x="983" y="115" width="1" height="5" fill="#000"/><rect x="994" y="115" width="1" height="5" fill="#000"/><rect x="1004" y="115" width="1" height="5" fill="#000"/><rect x="1034" y="109" width="1" height="11" fill="#000"/><rect x="1044" y="115" width="1" height="5" fill="#000"/><rect x="1055" y="115" width="1" height="5" fill="#000"/><rect x="1065" y="115" width="1" height="5" fill="#000"/><rect x="1075" y="115" width="1" height="5" fill="#000"/><rect x="1085" y="115" width="1" height="5" fill="#000"/><rect x="1095" y="115" width="1" height="5" fill="#000"/><rect x="1105" y="115" width="1" height="5" fill="#000"/><rect x="1136" y="109" width="1" height="11" fill="#000"/><rect x="1146" y="115" width="1" height="5" fill="#000"/><rect x="1156" y="115" width="1" height="5" fill="#000"/><rect x="1167" y="115" width="1" height="5" fill="#000"/></svg>
<div style="position:absolute;left:54px;top:107px;width:60px;text-align:right;font-size:14px;line-height:1;font-weight:bold;letter-spacing:-0.1px;white-space:nowrap;">500</div>
<div style="position:absolute;left:156px;top:107px;width:60px;text-align:right;font-size:14px;line-height:1;font-weight:bold;letter-spacing:-0.1px;white-space:nowrap;">400</div>
<div style="position:absolute;left:257px;top:107px;width:60px;text-align:right;font-size:14px;line-height:1;font-weight:bold;letter-spacing:-0.1px;white-space:nowrap;">300</div>
<div style="position:absolute;left:359px;top:107px;width:60px;text-align:right;font-size:14px;line-height:1;font-weight:bold;letter-spacing:-0.1px;white-space:nowrap;">200</div>
<div style="position:absolute;left:461px;top:107px;width:60px;text-align:right;font-size:14px;line-height:1;font-weight:bold;letter-spacing:-0.1px;white-space:nowrap;">100</div>
<div style="position:absolute;left:563px;top:107px;width:60px;text-align:right;font-size:14px;line-height:1;font-weight:bold;letter-spacing:-0.1px;white-space:nowrap;">0</div>
<div style="position:absolute;left:664px;top:107px;width:60px;text-align:right;font-size:14px;line-height:1;font-weight:bold;letter-spacing:-0.1px;white-space:nowrap;">100</div>
<div style="position:absolute;left:766px;top:107px;width:60px;text-align:right;font-size:14px;line-height:1;font-weight:bold;letter-spacing:-0.1px;white-space:nowrap;">200</div>
<div style="position:absolute;left:868px;top:107px;width:60px;text-align:right;font-size:14px;line-height:1;font-weight:bold;letter-spacing:-0.1px;white-space:nowrap;">300</div>
<div style="position:absolute;left:969px;top:107px;width:60px;text-align:right;font-size:14px;line-height:1;font-weight:bold;letter-spacing:-0.1px;white-space:nowrap;">400</div>
<div style="position:absolute;left:1071px;top:107px;width:60px;text-align:right;font-size:14px;line-height:1;font-weight:bold;letter-spacing:-0.1px;white-space:nowrap;">500</div>
<div style="position:absolute;left:1167px;top:108px;font-size:14px;line-height:1;color:#000;white-space:nowrap;font-weight:bold;letter-spacing:-0.8px;">mm</div>
<svg style="position:absolute;left:0;top:0" width="80" height="680" shape-rendering="crispEdges"><rect x="72" y="122" width="5" height="1" fill="#000"/><rect x="66" y="184" width="11" height="1" fill="#000"/><rect x="72" y="194" width="5" height="1" fill="#000"/><rect x="72" y="204" width="5" height="1" fill="#000"/><rect x="72" y="215" width="5" height="1" fill="#000"/><rect x="72" y="225" width="5" height="1" fill="#000"/><rect x="66" y="287" width="11" height="1" fill="#000"/><rect x="72" y="297" width="5" height="1" fill="#000"/><rect x="72" y="307" width="5" height="1" fill="#000"/><rect x="72" y="317" width="5" height="1" fill="#000"/><rect x="72" y="328" width="5" height="1" fill="#000"/><rect x="72" y="338" width="5" height="1" fill="#000"/><rect x="72" y="348" width="5" height="1" fill="#000"/><rect x="72" y="358" width="5" height="1" fill="#000"/><rect x="66" y="389" width="11" height="1" fill="#000"/><rect x="72" y="400" width="5" height="1" fill="#000"/><rect x="72" y="410" width="5" height="1" fill="#000"/><rect x="72" y="420" width="5" height="1" fill="#000"/><rect x="72" y="430" width="5" height="1" fill="#000"/><rect x="66" y="492" width="11" height="1" fill="#000"/><rect x="72" y="502" width="5" height="1" fill="#000"/><rect x="72" y="513" width="5" height="1" fill="#000"/><rect x="72" y="523" width="5" height="1" fill="#000"/><rect x="72" y="533" width="5" height="1" fill="#000"/><rect x="66" y="595" width="11" height="1" fill="#000"/><rect x="72" y="605" width="5" height="1" fill="#000"/><rect x="72" y="615" width="5" height="1" fill="#000"/><rect x="72" y="626" width="5" height="1" fill="#000"/><rect x="72" y="636" width="5" height="1" fill="#000"/></svg>
<div style="position:absolute;left:69px;top:133px;font-size:14px;line-height:1;color:#000;white-space:nowrap;font-weight:bold;">2</div>
<div style="position:absolute;left:69px;top:149px;font-size:14px;line-height:1;color:#000;white-space:nowrap;font-weight:bold;">0</div>
<div style="position:absolute;left:69px;top:165px;font-size:14px;line-height:1;color:#000;white-space:nowrap;font-weight:bold;">0</div>
<div style="position:absolute;left:69px;top:236px;font-size:14px;line-height:1;color:#000;white-space:nowrap;font-weight:bold;">1</div>
<div style="position:absolute;left:69px;top:252px;font-size:14px;line-height:1;color:#000;white-space:nowrap;font-weight:bold;">0</div>
<div style="position:absolute;left:69px;top:268px;font-size:14px;line-height:1;color:#000;white-space:nowrap;font-weight:bold;">0</div>
<div style="position:absolute;left:69px;top:370px;font-size:14px;line-height:1;color:#000;white-space:nowrap;font-weight:bold;">0</div>
<div style="position:absolute;left:69px;top:441px;font-size:14px;line-height:1;color:#000;white-space:nowrap;font-weight:bold;">1</div>
<div style="position:absolute;left:69px;top:457px;font-size:14px;line-height:1;color:#000;white-space:nowrap;font-weight:bold;">0</div>
<div style="position:absolute;left:69px;top:473px;font-size:14px;line-height:1;color:#000;white-space:nowrap;font-weight:bold;">0</div>
<div style="position:absolute;left:69px;top:544px;font-size:14px;line-height:1;color:#000;white-space:nowrap;font-weight:bold;">2</div>
<div style="position:absolute;left:69px;top:560px;font-size:14px;line-height:1;color:#000;white-space:nowrap;font-weight:bold;">0</div>
<div style="position:absolute;left:69px;top:576px;font-size:14px;line-height:1;color:#000;white-space:nowrap;font-weight:bold;">0</div>
<div style="position:absolute;left:69px;top:647px;font-size:14px;line-height:1;color:#000;white-space:nowrap;font-weight:bold;">3</div>
<div style="position:absolute;left:69px;top:663px;font-size:14px;line-height:1;color:#000;white-space:nowrap;font-weight:bold;">0</div>
<div style="position:absolute;left:77px;top:120px;width:1095px;height:538px;background:#000;border-top:1px solid #a0a0a0;border-left:1px solid #a0a0a0;"></div>
<div style="position:absolute;left:78px;top:121px;width:1094px;height:537px;background:#000;border-top:1px solid #696969;border-left:1px solid #696969;"></div>
<svg style="position:absolute;left:0;top:0" width="1366" height="768"><rect x="346.5" y="131.5" width="281" height="211" fill="none" stroke="#ff0000" shape-rendering="crispEdges"/><line x1="346.5" y1="131.5" x2="627.5" y2="342.5" stroke="#ff0000" stroke-width="1" shape-rendering="crispEdges"/><line x1="627.5" y1="131.5" x2="346.5" y2="342.5" stroke="#ff0000" stroke-width="1" shape-rendering="crispEdges"/><rect x="675.5" y="132.5" width="281" height="211" fill="none" stroke="#ff0000" shape-rendering="crispEdges"/><line x1="675.5" y1="132.5" x2="956.5" y2="343.5" stroke="#ff0000" stroke-width="1" shape-rendering="crispEdges"/><line x1="956.5" y1="132.5" x2="675.5" y2="343.5" stroke="#ff0000" stroke-width="1" shape-rendering="crispEdges"/><rect x="347.5" y="344.5" width="282" height="211" fill="none" stroke="#ff0000" shape-rendering="crispEdges"/><line x1="347.5" y1="344.5" x2="629.5" y2="555.5" stroke="#ff0000" stroke-width="1" shape-rendering="crispEdges"/><line x1="629.5" y1="344.5" x2="347.5" y2="555.5" stroke="#ff0000" stroke-width="1" shape-rendering="crispEdges"/><rect x="677.5" y="355.5" width="281" height="211" fill="none" stroke="#ff0000" shape-rendering="crispEdges"/><line x1="677.5" y1="355.5" x2="958.5" y2="566.5" stroke="#ff0000" stroke-width="1" shape-rendering="crispEdges"/><line x1="958.5" y1="355.5" x2="677.5" y2="566.5" stroke="#ff0000" stroke-width="1" shape-rendering="crispEdges"/><path d="M500.5 122 V276.5 H712 M714.5 122 V251" fill="none" stroke="#0000ff" shape-rendering="crispEdges"/><rect x="127.5" y="577.5" width="47" height="48" fill="none" stroke="#00a000" shape-rendering="crispEdges"/><path d="M124.5 587 L127.5 578 L130.5 587" fill="none" stroke="#00c000"/><path d="M165 622.5 L175 625.5 L165 628.5" fill="none" stroke="#ff0000"/><path d="M123 561 L127.5 567 L132 561 M127.5 567 V574" fill="none" stroke="#00c000" stroke-width="1.2"/><path d="M182 620 L190 631 M190 620 L182 631" fill="none" stroke="#ff0000" stroke-width="1.2"/></svg>
<svg style="position:absolute;left:359px;top:176px;background:#fdfdb8" width="219" height="47" viewBox="0 0 219 47"><defs><filter id="em359_176" x="-2%" y="-5%" width="104%" height="110%" color-interpolation-filters="sRGB">
<feGaussianBlur in="SourceAlpha" stdDeviation="0.9" result="b"/>
<feDiffuseLighting in="b" surfaceScale="3" diffuseConstant="1.05" lighting-color="#ffffff" result="l"><feDistantLight azimuth="235" elevation="50"/></feDiffuseLighting>
<feComposite in="SourceGraphic" in2="l" operator="arithmetic" k1="0.68" k2="0.42" k3="0" k4="0" result="lit"/>
<feTurbulence type="fractalNoise" baseFrequency="0.7" numOctaves="1" seed="68" result="n"/>
<feColorMatrix in="n" type="matrix" values="0 0 0 0 0.22  0 0 0 0 0.22  0 0 0 0 0.1  -22 0 0 0 7.6" result="sp"/>
<feComposite in="sp" in2="SourceAlpha" operator="in" result="sp2"/>
<feComposite in="lit" in2="SourceAlpha" operator="in" result="lit2"/>
<feMorphology in="SourceAlpha" operator="erode" radius="0.7" result="er"/><feComposite in="SourceAlpha" in2="er" operator="out" result="edge"/><feFlood flood-color="#55552a" flood-opacity="0.42"/><feComposite in2="edge" operator="in" result="edgec"/><feMerge><feMergeNode in="lit2"/><feMergeNode in="edgec"/><feMergeNode in="sp2"/></feMerge>
</filter></defs><g filter="url(#em359_176)"><g><path d="M2.4 20 Q8 20 12 21.7 Q17 23 18.5 24 Q16 29 17 30.6 Q19 35 21 35.4 Q27 36 32 34.6 Q38 33 40 30.6 Q41 27 39.5 24 Q36 21 35.4 19.3 Q35 16 37.8 15.3 Q41 14 45 14.5 Q50 15 54.7 18.5 Q60 21 64.4 21.7" fill="none" stroke="#acac60" stroke-width="4.6" stroke-linecap="round" stroke-linejoin="round"/><path d="M24 2.4 Q25 6 27.4 8 Q30 11 32.2 11.3 Q37 11 41.9 10.5 Q46 11 50 12.9 Q55 16 59.6 20 Q63 23 66.8 24" fill="none" stroke="#acac60" stroke-width="4.2" stroke-linecap="round" stroke-linejoin="round"/><path d="M66.8 26 Q61 28 56.4 30.6 Q52 32 50 34.6 Q49 38 48.3 40.3 Q46 42 43.5 41.9 Q41 40 39.5 37.8" fill="none" stroke="#acac60" stroke-width="4.0" stroke-linecap="round" stroke-linejoin="round"/><path d="M68 22 Q72 21 76.5 21 Q80 19 84.5 17.7 Q88 18 90 19.3" fill="none" stroke="#acac60" stroke-width="3.2" stroke-linecap="round" stroke-linejoin="round"/><path d="M68.4 28.2 Q74 31 80.5 33.8 Q85 35 88.6 35.4 Q93 34 96.6 30.6 Q101 26 104.7 23.3 Q108 21 112 20" fill="none" stroke="#acac60" stroke-width="4.4" stroke-linecap="round" stroke-linejoin="round"/><path d="M75.7 6.4 Q78 9 80.5 9.7 Q83 8 85.3 5.6 Q89 3 92.6 3.2 Q97 4 100.6 7.2 Q103 10 105.5 12.9 Q108 15 112 17" fill="none" stroke="#acac60" stroke-width="4.2" stroke-linecap="round" stroke-linejoin="round"/><path d="M85.3 18.5 Q88 25 89.4 32.2" fill="none" stroke="#acac60" stroke-width="3.2" stroke-linecap="round" stroke-linejoin="round"/><path d="M130 2.5 Q119 16 108.6 31" fill="none" stroke="#acac60" stroke-width="4.6" stroke-linecap="round" stroke-linejoin="round"/><path d="M115.2 4.9 Q120 12 125 18" fill="none" stroke="#acac60" stroke-width="4.0" stroke-linecap="round" stroke-linejoin="round"/><path d="M123.4 21.3 Q132 32 139.8 43.4" fill="none" stroke="#acac60" stroke-width="2.4" stroke-linecap="round" stroke-linejoin="round"/><path d="M126.7 20.5 Q131 20 134.9 24.6 Q132 27 128 26" fill="none" stroke="#acac60" stroke-width="3.0" stroke-linecap="round" stroke-linejoin="round"/><path d="M127.5 32.8 Q140 33 152 32" fill="none" stroke="#acac60" stroke-width="3.0" stroke-linecap="round" stroke-linejoin="round"/><path d="M170 18 Q180 12 189 10.7" fill="none" stroke="#acac60" stroke-width="2.5" stroke-linecap="round" stroke-linejoin="round"/><path d="M172.6 30.3 Q195 28 216 27" fill="none" stroke="#acac60" stroke-width="2.4" stroke-linecap="round" stroke-linejoin="round"/><path d="M66.8,21.7 Q71.6,12.8 68.4,3.2 Q63.6,12.1 66.8,21.7 Z" fill="#a8a85c" stroke="#a8a85c" stroke-width="0.8" stroke-linejoin="round"/><path d="M66.8,21.7 Q64.6,15.4 58,14.5 Q60.2,20.8 66.8,21.7 Z" fill="#a8a85c" stroke="#a8a85c" stroke-width="0.8" stroke-linejoin="round"/><path d="M66.8,21.7 Q60.5,28.5 59.6,37.8 Q65.9,31.0 66.8,21.7 Z" fill="#a8a85c" stroke="#a8a85c" stroke-width="0.8" stroke-linejoin="round"/><path d="M66.8,21.7 Q68.5,27.5 74,30 Q72.3,24.2 66.8,21.7 Z" fill="#a8a85c" stroke="#a8a85c" stroke-width="0.8" stroke-linejoin="round"/><path d="M136.5,6.6 Q140.2,16.0 149.6,19.7 Q145.9,10.3 136.5,6.6 Z" fill="#a8a85c" stroke="#a8a85c" stroke-width="0.8" stroke-linejoin="round"/><path d="M178.7,27.5 L171.0,28.6 L172.9,36.2 L165.8,33.0 L163.4,40.3 L159.1,33.9 L153.1,38.7 L153.0,31.0 L145.3,31.8 L149.4,25.2 L142.5,21.7 L149.5,18.5 L145.6,11.8 L153.3,12.8 L153.6,5.1 L159.5,10.1 L163.9,3.7 L166.1,11.2 L173.3,8.2 L171.2,15.7 L178.8,17.0 L173.0,22.2 Z" fill="#a8a85c" stroke="#a8a85c" stroke-width="0.8" stroke-linejoin="round"/><path d="M173,12 Q178.9,10.7 180.8,4.9 Q174.9,6.2 173,12 Z" fill="#a8a85c" stroke="#a8a85c" stroke-width="0.8" stroke-linejoin="round"/><path d="M189,10.7 Q195.0,9.2 197,3.3 Q191.0,4.8 189,10.7 Z" fill="#a8a85c" stroke="#a8a85c" stroke-width="0.8" stroke-linejoin="round"/><path d="M180.8,31 Q183.1,36.5 189,36 Q186.7,30.5 180.8,31 Z" fill="#a8a85c" stroke="#a8a85c" stroke-width="0.8" stroke-linejoin="round"/><path d="M201,24.6 Q205.5,26.1 207.8,22 Q203.3,20.5 201,24.6 Z" fill="#a8a85c" stroke="#a8a85c" stroke-width="0.8" stroke-linejoin="round"/><circle cx="161" cy="22" r="5.5" fill="#acac60"/></g></g><g><circle cx="161" cy="22" r="3.4" fill="#c8c88c" stroke="#5c5c30" stroke-width="1.1" opacity="0.9"/></g></svg>
<svg style="position:absolute;left:712px;top:251px;background:#fdfdb8" width="195" height="44" viewBox="0 0 195 44"><defs><filter id="em712_251" x="-2%" y="-5%" width="104%" height="110%" color-interpolation-filters="sRGB">
<feGaussianBlur in="SourceAlpha" stdDeviation="0.9" result="b"/>
<feDiffuseLighting in="b" surfaceScale="3" diffuseConstant="1.05" lighting-color="#ffffff" result="l"><feDistantLight azimuth="235" elevation="50"/></feDiffuseLighting>
<feComposite in="SourceGraphic" in2="l" operator="arithmetic" k1="0.68" k2="0.42" k3="0" k4="0" result="lit"/>
<feTurbulence type="fractalNoise" baseFrequency="0.7" numOctaves="1" seed="33" result="n"/>
<feColorMatrix in="n" type="matrix" values="0 0 0 0 0.22  0 0 0 0 0.22  0 0 0 0 0.1  -22 0 0 0 7.6" result="sp"/>
<feComposite in="sp" in2="SourceAlpha" operator="in" result="sp2"/>
<feComposite in="lit" in2="SourceAlpha" operator="in" result="lit2"/>
<feMorphology in="SourceAlpha" operator="erode" radius="0.7" result="er"/><feComposite in="SourceAlpha" in2="er" operator="out" result="edge"/><feFlood flood-color="#55552a" flood-opacity="0.42"/><feComposite in2="edge" operator="in" result="edgec"/><feMerge><feMergeNode in="lit2"/><feMergeNode in="edgec"/><feMergeNode in="sp2"/></feMerge>
</filter></defs><g filter="url(#em712_251)"><g><path d="M2.9 21.2 Q6 19 9.5 19 Q12 17.5 14.6 18.3 Q17 21 19.8 24.2 Q22 26.5 25.6 26.4 Q30 26 31.5 23.4 Q32 18 31.5 13.2 Q33 8 36.6 6.6 Q41 4.5 45.4 5.1 Q51 5 55.6 8.1 Q58.5 11 57.8 14.6 Q56 18 55.6 21.2 Q56 25 58.6 27.1 Q62 29 65.9 29.3 Q71 30 76.9 30 Q81 29.5 84.2 27.8" fill="none" stroke="#acac60" stroke-width="5.6" stroke-linecap="round" stroke-linejoin="round"/><path d="M39.5 25.6 Q42 28 45.4 30.7 Q49 31 52.7 28.6 Q57 29 60 33 Q58 36 58.6 38 Q61 40.5 65.9 40.3 Q72 39.5 77.6 36.6 Q82 34 84.9 30.7" fill="none" stroke="#acac60" stroke-width="4.8" stroke-linecap="round" stroke-linejoin="round"/><path d="M84.2 6.6 Q87 5 90 5.9 Q92.5 8 92.2 11 Q91 15 91.5 18.3" fill="none" stroke="#acac60" stroke-width="3.6" stroke-linecap="round" stroke-linejoin="round"/><path d="M95.2 4.4 Q97 9 96.6 14.6" fill="none" stroke="#acac60" stroke-width="3.4" stroke-linecap="round" stroke-linejoin="round"/><path d="M87.8 31.5 Q89 36 91.5 40.3" fill="none" stroke="#acac60" stroke-width="3.6" stroke-linecap="round" stroke-linejoin="round"/><path d="M102.3 11.7 Q110 10 117 10.2 Q123 12 128 14.6 Q134 18 139 19 Q143 18 143.3 14.6 Q142 10 142.6 7.3 Q145 4.5 150 4.4 Q156 4.5 160.9 5.9 Q165 8 165.3 12.4 Q164.5 16 163 19 Q161 22 160.9 24.2 Q164 26 168.2 24.9 Q172 21 175.5 15.4 Q179 15 182.8 19 Q187 21.5 192.4 22" fill="none" stroke="#acac60" stroke-width="5.4" stroke-linecap="round" stroke-linejoin="round"/><path d="M106 20 Q110 19 113.3 18.3 Q117 21 120.6 25.6 Q124 31 128 34.4 Q132 35 134.5 32.2 Q135 28 136 24.2 Q140 23 143.3 24.9 Q147 29 150 33 Q153 34 157.2 33" fill="none" stroke="#acac60" stroke-width="5.0" stroke-linecap="round" stroke-linejoin="round"/><path d="M71.7 18.3 Q80 19 86 17 Q93 14 99 15 Q106 18 106 25 Q105 33 98 35 Q90 36 86 30 Q84 25 86 22 Q79 21 71.7 18.3 Z" fill="#a8a85c" stroke="#a8a85c" stroke-width="0.8" stroke-linejoin="round"/><circle cx="88" cy="22.5" r="3.2" fill="#acac60"/></g></g><g><circle cx="88" cy="22.5" r="2.0" fill="#c8c88c" stroke="#5c5c30" stroke-width="1.1" opacity="0.9"/></g></svg>
<svg style="position:absolute;left:387px;top:396px;background:#fdfdb8" width="195" height="42" viewBox="0 0 195 42"><defs><filter id="em387_396" x="-2%" y="-5%" width="104%" height="110%" color-interpolation-filters="sRGB">
<feGaussianBlur in="SourceAlpha" stdDeviation="0.9" result="b"/>
<feDiffuseLighting in="b" surfaceScale="3" diffuseConstant="1.05" lighting-color="#ffffff" result="l"><feDistantLight azimuth="235" elevation="50"/></feDiffuseLighting>
<feComposite in="SourceGraphic" in2="l" operator="arithmetic" k1="0.68" k2="0.42" k3="0" k4="0" result="lit"/>
<feTurbulence type="fractalNoise" baseFrequency="0.7" numOctaves="1" seed="96" result="n"/>
<feColorMatrix in="n" type="matrix" values="0 0 0 0 0.22  0 0 0 0 0.22  0 0 0 0 0.1  -22 0 0 0 7.6" result="sp"/>
<feComposite in="sp" in2="SourceAlpha" operator="in" result="sp2"/>
<feComposite in="lit" in2="SourceAlpha" operator="in" result="lit2"/>
<feMorphology in="SourceAlpha" operator="erode" radius="0.7" result="er"/><feComposite in="SourceAlpha" in2="er" operator="out" result="edge"/><feFlood flood-color="#55552a" flood-opacity="0.42"/><feComposite in2="edge" operator="in" result="edgec"/><feMerge><feMergeNode in="lit2"/><feMergeNode in="edgec"/><feMergeNode in="sp2"/></feMerge>
</filter></defs><g filter="url(#em387_396)"><g><path d="M2.2 17.6 Q6 17.5 9.5 18.3 Q12 21 14.6 24.2 Q17 27.5 20.5 27.8 Q24 28 27 26.4 Q29.5 24 29.3 21.2 Q28.5 17 26.4 15.4 Q24 15 22 16.8 Q19.5 16 17.6 14.6" fill="none" stroke="#acac60" stroke-width="4.6" stroke-linecap="round" stroke-linejoin="round"/><path d="M27 14.6 Q30 13.5 33 13.9 Q36.5 15.5 39.5 19 Q41.5 22 43.9 24.2 Q47 26.5 51.2 27.1" fill="none" stroke="#acac60" stroke-width="4.8" stroke-linecap="round" stroke-linejoin="round"/><path d="M43.9 24.2 Q41 19 41.7 14.6 Q42.5 10 45.4 8.8 Q50 7.5 54.2 8.1 Q59 8.5 63 11 Q65 15 64.4 19 Q64.5 23 65.9 25.6 Q69 26.5 73.2 26.4" fill="none" stroke="#acac60" stroke-width="5.6" stroke-linecap="round" stroke-linejoin="round"/><path d="M47.6 32.2 Q53 31 58.6 30 Q64 28.5 69.5 27.8 Q73 28 76.9 29.3 Q82 31 86.4 31.5 Q89.5 30 90.8 27.8" fill="none" stroke="#acac60" stroke-width="5.2" stroke-linecap="round" stroke-linejoin="round"/><path d="M47.6 32.2 Q49 34.5 48.3 36.6 Q47 38 45.4 38.8" fill="none" stroke="#acac60" stroke-width="4.0" stroke-linecap="round" stroke-linejoin="round"/><path d="M70.3 11 Q72 7 74.7 5.9 Q79 5.5 82.7 6.6 Q82 9 80.5 11.7 Q79 15 77.6 17.6" fill="none" stroke="#acac60" stroke-width="4.2" stroke-linecap="round" stroke-linejoin="round"/><path d="M80.5 9.5 Q87 7.5 93 7.3 Q94.5 10 94.4 14.6" fill="none" stroke="#acac60" stroke-width="3.6" stroke-linecap="round" stroke-linejoin="round"/><path d="M95.2 22 Q98 26 102.3 27.8 Q110 27.5 117 27.1 Q125 26 133 24.9 Q141 24 150 23.4 Q159 23.5 168.2 24.2 Q180 25 190.2 26" fill="none" stroke="#acac60" stroke-width="2.8" stroke-linecap="round" stroke-linejoin="round"/><path d="M150 23.4 Q158 19 166.7 14.6 Q174 9 181.4 4.4" fill="none" stroke="#acac60" stroke-width="2.5" stroke-linecap="round" stroke-linejoin="round"/><path d="M126.5 4.4 Q125 10 124.3 14.6" fill="none" stroke="#acac60" stroke-width="2.2" stroke-linecap="round" stroke-linejoin="round"/><path d="M77 18 Q85 15 92 16 Q96 22 92 27 Q85 28 79 26 Q76 22 77 18 Z" fill="#a8a85c" stroke="#a8a85c" stroke-width="0.8" stroke-linejoin="round"/><path d="M144.4,7.5 L145.6,14.7 L152.8,13.5 L149.1,19.7 L155.3,23.4 L148.5,25.9 L150.9,32.7 L144.1,30.2 L141.6,37.0 L138.0,30.7 L131.7,34.2 L133.0,27.1 L125.9,25.8 L131.4,21.1 L126.9,15.5 L134.1,15.6 L134.2,8.3 L139.7,13.0 Z" fill="#a8a85c" stroke="#a8a85c" stroke-width="0.8" stroke-linejoin="round"/><path d="M140,22 Q148.3,14.3 148.4,2.9 Q140.1,10.6 140,22 Z" fill="#a8a85c" stroke="#a8a85c" stroke-width="0.8" stroke-linejoin="round"/><path d="M140,22 Q137.3,14.5 129.4,13.2 Q132.1,20.7 140,22 Z" fill="#a8a85c" stroke="#a8a85c" stroke-width="0.8" stroke-linejoin="round"/><path d="M140,22 Q135.5,29.8 139,38 Q143.5,30.2 140,22 Z" fill="#a8a85c" stroke="#a8a85c" stroke-width="0.8" stroke-linejoin="round"/><path d="M140,22 Q148.1,33.2 161,38 Q152.9,26.8 140,22 Z" fill="#a8a85c" stroke="#a8a85c" stroke-width="0.8" stroke-linejoin="round"/><path d="M163,12 Q170.0,11.7 172,5 Q165.0,5.3 163,12 Z" fill="#a8a85c" stroke="#a8a85c" stroke-width="0.8" stroke-linejoin="round"/><path d="M112,19 Q117.7,21.4 122,17 Q116.3,14.6 112,19 Z" fill="#a8a85c" stroke="#a8a85c" stroke-width="0.8" stroke-linejoin="round"/><path d="M172,23 Q177.4,24.3 181,20 Q175.6,18.7 172,23 Z" fill="#a8a85c" stroke="#a8a85c" stroke-width="0.8" stroke-linejoin="round"/><path d="M170,28 Q170.9,33.1 176,34 Q175.1,28.9 170,28 Z" fill="#a8a85c" stroke="#a8a85c" stroke-width="0.8" stroke-linejoin="round"/><path d="M102.3,30.7 Q105.1,37.0 111.8,38.8 Q109.0,32.5 102.3,30.7 Z" fill="#a8a85c" stroke="#a8a85c" stroke-width="0.8" stroke-linejoin="round"/><path d="M95,14.6 Q99.0,18.5 104.5,17.6 Q100.5,13.7 95,14.6 Z" fill="#a8a85c" stroke="#a8a85c" stroke-width="0.8" stroke-linejoin="round"/><circle cx="140.4" cy="22" r="3.5" fill="#acac60"/><circle cx="168.2" cy="8.8" r="3" fill="#acac60"/><circle cx="117" cy="18.3" r="3" fill="#acac60"/></g></g><g><circle cx="140.4" cy="22" r="2.2" fill="#c8c88c" stroke="#5c5c30" stroke-width="1.1" opacity="0.9"/></g></svg>
<svg style="position:absolute;left:694px;top:431px;background:#fdfdb8" width="260" height="57" viewBox="0 0 260 57"><defs><filter id="em694_431" x="-2%" y="-5%" width="104%" height="110%" color-interpolation-filters="sRGB">
<feGaussianBlur in="SourceAlpha" stdDeviation="0.9" result="b"/>
<feDiffuseLighting in="b" surfaceScale="3" diffuseConstant="1.05" lighting-color="#ffffff" result="l"><feDistantLight azimuth="235" elevation="50"/></feDiffuseLighting>
<feComposite in="SourceGraphic" in2="l" operator="arithmetic" k1="0.68" k2="0.42" k3="0" k4="0" result="lit"/>
<feTurbulence type="fractalNoise" baseFrequency="0.7" numOctaves="1" seed="15" result="n"/>
<feColorMatrix in="n" type="matrix" values="0 0 0 0 0.22  0 0 0 0 0.22  0 0 0 0 0.1  -22 0 0 0 7.6" result="sp"/>
<feComposite in="sp" in2="SourceAlpha" operator="in" result="sp2"/>
<feComposite in="lit" in2="SourceAlpha" operator="in" result="lit2"/>
<feMorphology in="SourceAlpha" operator="erode" radius="0.7" result="er"/><feComposite in="SourceAlpha" in2="er" operator="out" result="edge"/><feFlood flood-color="#55552a" flood-opacity="0.42"/><feComposite in2="edge" operator="in" result="edgec"/><feMerge><feMergeNode in="lit2"/><feMergeNode in="edgec"/><feMergeNode in="sp2"/></feMerge>
</filter></defs><g filter="url(#em694_431)"><g><path d="M3.8 17 Q8 15 11.4 13.3 Q15 9 19 9.5 Q24 11 27.6 16.2 Q32 19 36.2 19 Q41 19 43.8 17 Q41 12 42.9 8.6 Q45 4 49.5 3.8 Q56 3 61 4.8 Q66 7 65.7 11.4 Q66 16 64.8 19" fill="none" stroke="#acac60" stroke-width="6.0" stroke-linecap="round" stroke-linejoin="round"/><path d="M2.9 34.3 Q6 37 9.5 38 Q14 35 17 35.2 Q21 38 24.8 42.9 Q30 46 38 46.7" fill="none" stroke="#acac60" stroke-width="6.4" stroke-linecap="round" stroke-linejoin="round"/><path d="M38 42 Q36 35 38 30.5 Q41 26 45.7 24.8 Q52 23 57 24.8 Q62 27 66.7 30.5 Q71 35 74.3 40 Q79 45 85.7 47.6 Q93 49 99 46.7 Q105 44 110.5 38 Q117 31 123.8 24.8" fill="none" stroke="#acac60" stroke-width="6.4" stroke-linecap="round" stroke-linejoin="round"/><path d="M44.8 20 Q65 19 85.7 20 Q96 23 104.8 28.6 Q114 29 123.8 28.6" fill="none" stroke="#acac60" stroke-width="3.2" stroke-linecap="round" stroke-linejoin="round"/><path d="M32.4 43.8 Q50 34 66.7 28.6 Q76 28 85.7 28.6" fill="none" stroke="#acac60" stroke-width="3.0" stroke-linecap="round" stroke-linejoin="round"/><path d="M85.7 12.4 Q87 6 91.4 4.8 Q98 4 104.8 6.7 Q110 9 114 12.4 Q120 19 123.8 26.7" fill="none" stroke="#acac60" stroke-width="5.2" stroke-linecap="round" stroke-linejoin="round"/><path d="M106.7 7.6 Q113 16 119 24.8" fill="none" stroke="#acac60" stroke-width="2.6" stroke-linecap="round" stroke-linejoin="round"/><path d="M121 14.3 Q124 11 126.5 12.5 Q127 16 124 18" fill="none" stroke="#acac60" stroke-width="3.0" stroke-linecap="round" stroke-linejoin="round"/><path d="M126 21.6 Q130 16 135.8 11.8 Q140 8 145.6 6.9 Q151 6 152.5 8.8 Q151 11 149.5 11.8" fill="none" stroke="#acac60" stroke-width="5.6" stroke-linecap="round" stroke-linejoin="round"/><path d="M129 28.5 Q134 31 140.7 32.4 Q148 35 155.4 35.3 Q162 35 170.2 34.3" fill="none" stroke="#acac60" stroke-width="3.6" stroke-linecap="round" stroke-linejoin="round"/><path d="M140.7 36.3 Q158 41 175 43.2 Q190 44 204.5 43.2 Q213 41 219 38.3 Q225 34 230 29.4 Q237 26 243.8 24.5 Q250 23 255.5 21.1" fill="none" stroke="#acac60" stroke-width="3.6" stroke-linecap="round" stroke-linejoin="round"/><path d="M145.6 39.3 Q157 47 169.2 54" fill="none" stroke="#acac60" stroke-width="2.4" stroke-linecap="round" stroke-linejoin="round"/><path d="M126 34.3 Q130 40 133.9 46" fill="none" stroke="#acac60" stroke-width="4.0" stroke-linecap="round" stroke-linejoin="round"/><path d="M188.8 16.7 Q198 10 206.5 3.9" fill="none" stroke="#acac60" stroke-width="2.6" stroke-linecap="round" stroke-linejoin="round"/><path d="M200.6 29.4 Q212 24 224 18.6" fill="none" stroke="#acac60" stroke-width="2.4" stroke-linecap="round" stroke-linejoin="round"/><path d="M78 36 Q90 28 104 27 Q115 26 124 27 Q112 33 96 35 Q86 37 78 36 Z" fill="#a8a85c" stroke="#a8a85c" stroke-width="0.8" stroke-linejoin="round"/><path d="M154.5,12.8 Q157.8,22.0 167.2,24.5 Q163.9,15.3 154.5,12.8 Z" fill="#a8a85c" stroke="#a8a85c" stroke-width="0.8" stroke-linejoin="round"/><path d="M190.2,26.3 L184.8,28.0 L186.1,33.5 L180.7,31.8 L178.5,37.0 L175.2,32.4 L170.4,35.4 L170.4,29.7 L164.7,29.2 L168.1,24.6 L163.8,20.9 L169.2,19.2 L167.9,13.7 L173.3,15.4 L175.5,10.2 L178.8,14.8 L183.6,11.8 L183.6,17.5 L189.3,18.0 L185.9,22.6 Z" fill="#a8a85c" stroke="#a8a85c" stroke-width="0.8" stroke-linejoin="round"/><path d="M194.2,40.0 L189.6,40.3 L188.8,44.8 L185.2,42.0 L181.6,44.9 L180.6,40.5 L176.0,40.5 L178.1,36.4 L174.6,33.4 L178.9,31.6 L178.1,27.1 L182.5,28.5 L184.8,24.5 L187.2,28.4 L191.6,26.8 L191.0,31.4 L195.3,32.9 L191.9,36.1 Z" fill="#a8a85c" stroke="#a8a85c" stroke-width="0.8" stroke-linejoin="round"/><path d="M186.8,17.7 Q192.4,21.6 198.6,18.6 Q193.0,14.7 186.8,17.7 Z" fill="#a8a85c" stroke="#a8a85c" stroke-width="0.8" stroke-linejoin="round"/><path d="M194.7,30.4 Q194.8,36.3 200,39 Q199.9,33.1 194.7,30.4 Z" fill="#a8a85c" stroke="#a8a85c" stroke-width="0.8" stroke-linejoin="round"/><path d="M225,12.8 Q226.1,19.2 232,22 Q230.9,15.6 225,12.8 Z" fill="#a8a85c" stroke="#a8a85c" stroke-width="0.8" stroke-linejoin="round"/><path d="M247.7,17.7 Q240.9,19.6 238,26 Q244.8,24.1 247.7,17.7 Z" fill="#a8a85c" stroke="#a8a85c" stroke-width="0.8" stroke-linejoin="round"/><circle cx="125" cy="27.6" r="2.5" fill="#acac60"/><circle cx="177" cy="23.6" r="4" fill="#acac60"/><circle cx="185" cy="34.3" r="3.5" fill="#acac60"/><circle cx="212.4" cy="20.6" r="3.5" fill="#acac60"/><circle cx="234" cy="23.6" r="4.5" fill="#acac60"/><circle cx="216.3" cy="46" r="5" fill="#acac60"/></g></g><g><circle cx="177" cy="23.6" r="2.5" fill="#c8c88c" stroke="#5c5c30" stroke-width="1.1" opacity="0.9"/><circle cx="185" cy="34.3" r="2.2" fill="#c8c88c" stroke="#5c5c30" stroke-width="1.1" opacity="0.9"/></g></svg>
<svg style="position:absolute;left:408px;top:580px;background:#fdfdb8" width="260" height="57" viewBox="0 0 260 57"><defs><filter id="em408_580" x="-2%" y="-5%" width="104%" height="110%" color-interpolation-filters="sRGB">
<feGaussianBlur in="SourceAlpha" stdDeviation="0.9" result="b"/>
<feDiffuseLighting in="b" surfaceScale="3" diffuseConstant="1.05" lighting-color="#ffffff" result="l"><feDistantLight azimuth="235" elevation="50"/></feDiffuseLighting>
<feComposite in="SourceGraphic" in2="l" operator="arithmetic" k1="0.68" k2="0.42" k3="0" k4="0" result="lit"/>
<feTurbulence type="fractalNoise" baseFrequency="0.7" numOctaves="1" seed="20" result="n"/>
<feColorMatrix in="n" type="matrix" values="0 0 0 0 0.22  0 0 0 0 0.22  0 0 0 0 0.1  -22 0 0 0 7.6" result="sp"/>
<feComposite in="sp" in2="SourceAlpha" operator="in" result="sp2"/>
<feComposite in="lit" in2="SourceAlpha" operator="in" result="lit2"/>
<feMorphology in="SourceAlpha" operator="erode" radius="0.7" result="er"/><feComposite in="SourceAlpha" in2="er" operator="out" result="edge"/><feFlood flood-color="#55552a" flood-opacity="0.42"/><feComposite in2="edge" operator="in" result="edgec"/><feMerge><feMergeNode in="lit2"/><feMergeNode in="edgec"/><feMergeNode in="sp2"/></feMerge>
</filter></defs><g filter="url(#em408_580)"><g transform="translate(260,0) scale(-1,1)"><path d="M3.8 17 Q8 15 11.4 13.3 Q15 9 19 9.5 Q24 11 27.6 16.2 Q32 19 36.2 19 Q41 19 43.8 17 Q41 12 42.9 8.6 Q45 4 49.5 3.8 Q56 3 61 4.8 Q66 7 65.7 11.4 Q66 16 64.8 19" fill="none" stroke="#acac60" stroke-width="6.0" stroke-linecap="round" stroke-linejoin="round"/><path d="M2.9 34.3 Q6 37 9.5 38 Q14 35 17 35.2 Q21 38 24.8 42.9 Q30 46 38 46.7" fill="none" stroke="#acac60" stroke-width="6.4" stroke-linecap="round" stroke-linejoin="round"/><path d="M38 42 Q36 35 38 30.5 Q41 26 45.7 24.8 Q52 23 57 24.8 Q62 27 66.7 30.5 Q71 35 74.3 40 Q79 45 85.7 47.6 Q93 49 99 46.7 Q105 44 110.5 38 Q117 31 123.8 24.8" fill="none" stroke="#acac60" stroke-width="6.4" stroke-linecap="round" stroke-linejoin="round"/><path d="M44.8 20 Q65 19 85.7 20 Q96 23 104.8 28.6 Q114 29 123.8 28.6" fill="none" stroke="#acac60" stroke-width="3.2" stroke-linecap="round" stroke-linejoin="round"/><path d="M32.4 43.8 Q50 34 66.7 28.6 Q76 28 85.7 28.6" fill="none" stroke="#acac60" stroke-width="3.0" stroke-linecap="round" stroke-linejoin="round"/><path d="M85.7 12.4 Q87 6 91.4 4.8 Q98 4 104.8 6.7 Q110 9 114 12.4 Q120 19 123.8 26.7" fill="none" stroke="#acac60" stroke-width="5.2" stroke-linecap="round" stroke-linejoin="round"/><path d="M106.7 7.6 Q113 16 119 24.8" fill="none" stroke="#acac60" stroke-width="2.6" stroke-linecap="round" stroke-linejoin="round"/><path d="M121 14.3 Q124 11 126.5 12.5 Q127 16 124 18" fill="none" stroke="#acac60" stroke-width="3.0" stroke-linecap="round" stroke-linejoin="round"/><path d="M126 21.6 Q130 16 135.8 11.8 Q140 8 145.6 6.9 Q151 6 152.5 8.8 Q151 11 149.5 11.8" fill="none" stroke="#acac60" stroke-width="5.6" stroke-linecap="round" stroke-linejoin="round"/><path d="M129 28.5 Q134 31 140.7 32.4 Q148 35 155.4 35.3 Q162 35 170.2 34.3" fill="none" stroke="#acac60" stroke-width="3.6" stroke-linecap="round" stroke-linejoin="round"/><path d="M140.7 36.3 Q158 41 175 43.2 Q190 44 204.5 43.2 Q213 41 219 38.3 Q225 34 230 29.4 Q237 26 243.8 24.5 Q250 23 255.5 21.1" fill="none" stroke="#acac60" stroke-width="3.6" stroke-linecap="round" stroke-linejoin="round"/><path d="M145.6 39.3 Q157 47 169.2 54" fill="none" stroke="#acac60" stroke-width="2.4" stroke-linecap="round" stroke-linejoin="round"/><path d="M126 34.3 Q130 40 133.9 46" fill="none" stroke="#acac60" stroke-width="4.0" stroke-linecap="round" stroke-linejoin="round"/><path d="M188.8 16.7 Q198 10 206.5 3.9" fill="none" stroke="#acac60" stroke-width="2.6" stroke-linecap="round" stroke-linejoin="round"/><path d="M200.6 29.4 Q212 24 224 18.6" fill="none" stroke="#acac60" stroke-width="2.4" stroke-linecap="round" stroke-linejoin="round"/><path d="M78 36 Q90 28 104 27 Q115 26 124 27 Q112 33 96 35 Q86 37 78 36 Z" fill="#a8a85c" stroke="#a8a85c" stroke-width="0.8" stroke-linejoin="round"/><path d="M154.5,12.8 Q157.8,22.0 167.2,24.5 Q163.9,15.3 154.5,12.8 Z" fill="#a8a85c" stroke="#a8a85c" stroke-width="0.8" stroke-linejoin="round"/><path d="M190.2,26.3 L184.8,28.0 L186.1,33.5 L180.7,31.8 L178.5,37.0 L175.2,32.4 L170.4,35.4 L170.4,29.7 L164.7,29.2 L168.1,24.6 L163.8,20.9 L169.2,19.2 L167.9,13.7 L173.3,15.4 L175.5,10.2 L178.8,14.8 L183.6,11.8 L183.6,17.5 L189.3,18.0 L185.9,22.6 Z" fill="#a8a85c" stroke="#a8a85c" stroke-width="0.8" stroke-linejoin="round"/><path d="M194.2,40.0 L189.6,40.3 L188.8,44.8 L185.2,42.0 L181.6,44.9 L180.6,40.5 L176.0,40.5 L178.1,36.4 L174.6,33.4 L178.9,31.6 L178.1,27.1 L182.5,28.5 L184.8,24.5 L187.2,28.4 L191.6,26.8 L191.0,31.4 L195.3,32.9 L191.9,36.1 Z" fill="#a8a85c" stroke="#a8a85c" stroke-width="0.8" stroke-linejoin="round"/><path d="M186.8,17.7 Q192.4,21.6 198.6,18.6 Q193.0,14.7 186.8,17.7 Z" fill="#a8a85c" stroke="#a8a85c" stroke-width="0.8" stroke-linejoin="round"/><path d="M194.7,30.4 Q194.8,36.3 200,39 Q199.9,33.1 194.7,30.4 Z" fill="#a8a85c" stroke="#a8a85c" stroke-width="0.8" stroke-linejoin="round"/><path d="M225,12.8 Q226.1,19.2 232,22 Q230.9,15.6 225,12.8 Z" fill="#a8a85c" stroke="#a8a85c" stroke-width="0.8" stroke-linejoin="round"/><path d="M247.7,17.7 Q240.9,19.6 238,26 Q244.8,24.1 247.7,17.7 Z" fill="#a8a85c" stroke="#a8a85c" stroke-width="0.8" stroke-linejoin="round"/><circle cx="125" cy="27.6" r="2.5" fill="#acac60"/><circle cx="177" cy="23.6" r="4" fill="#acac60"/><circle cx="185" cy="34.3" r="3.5" fill="#acac60"/><circle cx="212.4" cy="20.6" r="3.5" fill="#acac60"/><circle cx="234" cy="23.6" r="4.5" fill="#acac60"/><circle cx="216.3" cy="46" r="5" fill="#acac60"/></g></g><g transform="translate(260,0) scale(-1,1)"><circle cx="177" cy="23.6" r="2.5" fill="#c8c88c" stroke="#5c5c30" stroke-width="1.1" opacity="0.9"/><circle cx="185" cy="34.3" r="2.2" fill="#c8c88c" stroke="#5c5c30" stroke-width="1.1" opacity="0.9"/></g></svg>
<div style="position:absolute;left:31px;top:380px;width:2px;height:300px;background:#f0f0f0;"></div>
<div style="position:absolute;left:33px;top:379px;width:29px;height:1px;background:#a0a0a0;"></div>
<div style="position:absolute;left:0px;top:356px;width:30px;height:1px;background:#a0a0a0;"></div>
<div style="position:absolute;left:0px;top:357px;width:30px;height:1px;background:#fff;"></div>
<div style="position:absolute;left:29px;top:359px;width:1px;height:269px;background:#a0a0a0;"></div>
<div style="position:absolute;left:0px;top:628px;width:30px;height:1px;background:#a0a0a0;"></div>

<div style="position:absolute;left:4px;top:532px;width:24px;height:1px;background:#a0a0a0;"></div>
<div style="position:absolute;left:4px;top:533px;width:24px;height:1px;background:#fff;"></div>
<div style="position:absolute;left:37px;top:283px;width:22px;height:1px;background:#a0a0a0;"></div>
<div style="position:absolute;left:37px;top:284px;width:22px;height:1px;background:#fff;"></div>
<div style="position:absolute;left:1px;top:114px;width:30px;height:28px;border:1px solid #8a8a8a;border-radius:3px;background:linear-gradient(#e6e6e6,#d2d2d2);box-shadow:inset 1px 1px 2px rgba(0,0,0,0.25);"></div>
<svg style="position:absolute;left:4px;top:117px;" width="22" height="22" viewBox="0 0 22 22"><rect x="4.5" y="4.5" width="13" height="13" fill="none" stroke="#0000ff" stroke-width="2"/><rect x="3" y="3" width="3" height="3" fill="#fff" stroke="#000080"/><rect x="16" y="3" width="3" height="3" fill="#fff" stroke="#000080"/><rect x="3" y="16" width="3" height="3" fill="#fff" stroke="#000080"/><rect x="16" y="16" width="3" height="3" fill="#fff" stroke="#000080"/><rect x="9.5" y="3" width="3" height="3" fill="#fff" stroke="#ff0000"/><rect x="9.5" y="16" width="3" height="3" fill="#fff" stroke="#ff0000"/><rect x="3" y="9.5" width="3" height="3" fill="#fff" stroke="#ff0000"/><rect x="16" y="9.5" width="3" height="3" fill="#fff" stroke="#ff0000"/><rect x="10" y="10" width="2" height="2" fill="none" stroke="#00ff00"/></svg>
<svg style="position:absolute;left:4px;top:146px;" width="22" height="22" viewBox="0 0 22 22"><path d="M11 10 L20 5 M10 11 L3 20 M12 12 L15 19" stroke="#0000ff" stroke-width="1.8"/><path d="M14 13 L21 16 L16 18 Z" fill="#0000ff"/><rect x="7" y="6" width="6" height="6" fill="#fff" stroke="#ff0000" stroke-width="2"/></svg>
<svg style="position:absolute;left:4px;top:178px;" width="22" height="22" viewBox="0 0 22 22"><text x="1" y="13" font-family="Liberation Sans" font-weight="bold" font-size="13" fill="#008000">abc</text><rect x="2" y="15" width="19" height="3" rx="1.5" fill="#0000ff"/></svg>
<svg style="position:absolute;left:4px;top:207px;" width="22" height="22" viewBox="0 0 22 22"><path d="M7.5 2.5 H14.5 L19.5 7.5 V14.5 L14.5 19.5 H7.5 L2.5 14.5 V7.5 Z" fill="#fff" stroke="#ff0000" stroke-width="2"/><rect x="7" y="7" width="8" height="8" fill="#fff" stroke="#0000ff" stroke-width="2"/></svg>
<svg style="position:absolute;left:4px;top:238px;" width="22" height="22" viewBox="0 0 22 22"><path d="M1 2 V20 H12 Z" fill="#00ffff"/><path d="M2 10 L10 2 L19 11 V16 L12 19 Z" fill="#ffff00" opacity="0.9"/><path d="M2 10 L10 2 L19 11 M19 16 Q18 19 12 19 L2 10" fill="none" stroke="#000080" stroke-width="1.4"/></svg>
<svg style="position:absolute;left:4px;top:268px;" width="22" height="22" viewBox="0 0 22 22"><path d="M1 13 L8 10 H20 L13 18 H1 Z" fill="#c0a000"/><path d="M1 17 H13 L20 12 V14 L13 19 H1 Z" fill="#806000"/><path d="M8 16 L18 6 L21 3 L21 7 L11 16 Z" fill="#4060c0"/><path d="M8 16 L11 16 L9 18 Z" fill="#fff"/></svg>
<svg style="position:absolute;left:4px;top:296px;" width="22" height="22" viewBox="0 0 22 22"><ellipse cx="11" cy="5" rx="4" ry="2.2" fill="#60e060" stroke="#006000"/><path d="M7 5 V10 L3 15 Q11 20 19 15 L15 10 V5" fill="#00c000" stroke="#004000"/></svg>
<svg style="position:absolute;left:4px;top:327px;" width="22" height="22" viewBox="0 0 22 22"><rect x="9" y="1" width="5" height="17" fill="#fff" stroke="#333"/><path d="M9 5 L14 3 M9 9 L14 7 M9 13 L14 11 M9 17 L14 15" stroke="#333"/><text x="0" y="19" font-family="Liberation Sans" font-weight="bold" font-size="7" fill="#ff0000">N</text><text x="16" y="19" font-family="Liberation Sans" font-weight="bold" font-size="7" fill="#ff0000">C</text></svg>
<svg style="position:absolute;left:4px;top:364px;" width="22" height="22" viewBox="0 0 22 22"><rect x="3.5" y="3.5" width="10" height="9" fill="#fff" stroke="#000"/><circle cx="11" cy="11" r="4.5" fill="#fff" stroke="#0060c0" stroke-width="1.8"/><circle cx="11" cy="11" r="2.5" fill="#80e0ff"/><path d="M14 14 L19 19" stroke="#c000c0" stroke-width="2.4"/></svg>
<svg style="position:absolute;left:4px;top:392px;" width="22" height="22" viewBox="0 0 22 22"><circle cx="9" cy="9" r="5" fill="#fff" stroke="#0060c0" stroke-width="2"/><circle cx="9" cy="9" r="3" fill="#80e0ff"/><path d="M12.5 12.5 L18 18" stroke="#c000c0" stroke-width="2.6"/><path d="M14 3 H19" stroke="#000"/></svg>
<svg style="position:absolute;left:4px;top:420px;" width="22" height="22" viewBox="0 0 22 22"><circle cx="9" cy="9" r="5" fill="#fff" stroke="#0060c0" stroke-width="2"/><circle cx="9" cy="9" r="3" fill="#80e0ff"/><path d="M12.5 12.5 L18 18" stroke="#c000c0" stroke-width="2.6"/><path d="M14 3 H19 M16.5 0.5 V5.5" stroke="#000"/></svg>
<svg style="position:absolute;left:4px;top:449px;" width="22" height="22" viewBox="0 0 22 22"><path d="M4 7 H10 L4 13 H10 M11 3 H16 L11 8 H16" fill="none" stroke="#a0a0a0" stroke-width="1.2"/><path d="M18 12 L6 19 M6 15 V19 H10" fill="none" stroke="#a0a0a0" stroke-width="1.2"/></svg>
<svg style="position:absolute;left:4px;top:478px;" width="22" height="22" viewBox="0 0 22 22"><ellipse cx="11" cy="12" rx="9" ry="5" fill="#606060"/><ellipse cx="11" cy="11" rx="8" ry="4.5" fill="#fff"/><circle cx="11" cy="11" r="3.5" fill="#00a0e0"/><circle cx="11" cy="11" r="1.5" fill="#000"/><path d="M3 8 Q11 2 19 8" fill="none" stroke="#000080" stroke-width="2"/><path d="M5 6 L4 3 M8 5 L7 2 M11 4 V1 M14 5 L15 2 M17 6 L18 3" stroke="#000080"/></svg>
<svg style="position:absolute;left:4px;top:506px;" width="22" height="22" viewBox="0 0 22 22"><circle cx="11" cy="10" r="6" fill="#fff" stroke="#0060c0" stroke-width="1.8"/><path d="M11 7 V12 M11 13 V14" stroke="#c00000"/><path d="M5 18 L9 14 M3 15 H7 V19" stroke="#c000c0" stroke-width="1.5" fill="none"/></svg>
<svg style="position:absolute;left:4px;top:540px;" width="22" height="22" viewBox="0 0 22 22"><path d="M11 2 V20 M2 11 H20" stroke="#000" stroke-width="1.5"/><path d="M11 1 L8 5 H14 Z M11 21 L8 17 H14 Z M1 11 L5 8 V14 Z M21 11 L17 8 V14 Z" fill="#000"/></svg>
<svg style="position:absolute;left:4px;top:567px;" width="22" height="22" viewBox="0 0 22 22"><circle cx="10" cy="10" r="7" fill="#fff" stroke="#000" stroke-width="1.5"/><path d="M10 5 V15" stroke="#000"/><path d="M10 4 L8 7 H12 Z M10 16 L8 13 H12 Z" fill="#000"/><path d="M15 15 L20 20" stroke="#008080" stroke-width="2.5"/></svg>
<svg style="position:absolute;left:4px;top:595px;" width="22" height="22" viewBox="0 0 22 22"><path d="M4 12 Q4 4 12 4 Q16 4 18 7 M18 10 Q18 18 10 18 Q6 18 4 15" fill="none" stroke="#000" stroke-width="1.4"/><path d="M15 7 H19.5 V2.5 Z M7 15 H2.5 V19.5 Z" fill="#000"/></svg>
<svg style="position:absolute;left:35px;top:116px;" width="22" height="22" viewBox="0 0 22 22"><circle cx="11" cy="8.5" r="5.3" fill="#008000" stroke="#000" stroke-width="1.2"/><rect x="8.5" y="14" width="5" height="4.5" fill="#fff" stroke="#000"/><path d="M8.5 16.2 H13.5" stroke="#000"/></svg>
<svg style="position:absolute;left:35px;top:144px;" width="22" height="22" viewBox="0 0 22 22"><circle cx="11" cy="8.5" r="5.3" fill="#ffff00" stroke="#000" stroke-width="1.2"/><rect x="8.5" y="14" width="5" height="4.5" fill="#fff" stroke="#000"/><path d="M8.5 16.2 H13.5" stroke="#000"/></svg>
<svg style="position:absolute;left:35px;top:172px;" width="22" height="22" viewBox="0 0 22 22"><circle cx="14" cy="7" r="5" fill="none" stroke="#a0a0a0" stroke-width="1.5"/><circle cx="14" cy="7" r="2.5" fill="#a0a0a0"/><path d="M3 8 L3 20 L6 17 L9 21 L10 19 L8 16 L12 16 Z" fill="#a0a0a0"/></svg>
<svg style="position:absolute;left:35px;top:200px;" width="22" height="22" viewBox="0 0 22 22"><circle cx="6" cy="6" r="4" fill="#808080" stroke="#000"/><circle cx="15" cy="15" r="4" fill="#ffff00" stroke="#000"/><path d="M15 2 V9 M12 6 L15 9 L18 6 M6 20 V13 M3 16 L6 13 L9 16" stroke="#000" stroke-width="1.5" fill="none"/></svg>
<svg style="position:absolute;left:35px;top:228px;" width="22" height="22" viewBox="0 0 22 22"><path d="M3 11 L11 4 V8 H18 V14 H11 V18 Z" fill="#d0d0d0" stroke="#a0a0a0"/></svg>
<svg style="position:absolute;left:35px;top:256px;" width="22" height="22" viewBox="0 0 22 22"><path d="M19 11 L11 4 V8 H4 V14 H11 V18 Z" fill="#d0d0d0" stroke="#a0a0a0"/></svg>
<svg style="position:absolute;left:35px;top:290px;" width="22" height="22" viewBox="0 0 22 22"><path d="M4.5 6 L9.5 3 V17 L4.5 20 Z M9.5 6 L14.5 3 V17 L9.5 20 Z M14.5 6 L18.5 4 V17 L14.5 20 Z" fill="#fff" stroke="#000080" stroke-width="1.2"/></svg>
<svg style="position:absolute;left:35px;top:319px;" width="22" height="22" viewBox="0 0 22 22"><path d="M3 5 H19 M3 9 H7 M10 9 H19 M3 13 H5 M8 13 H10 M13 13 H15 M17 13 H19 M3 17 H19" stroke="#400040" stroke-width="1.5"/><path d="M3 7 H19 M3 15 H19" stroke="#c000c0" stroke-width="0.6"/></svg>
<svg style="position:absolute;left:35px;top:343px;" width="22" height="22" viewBox="0 0 22 22"><ellipse cx="11" cy="9" rx="8" ry="3" fill="none" stroke="#a0a0a0" stroke-width="1.4"/><path d="M3 9 L9 15 V20 H13 V15 L19 9 M6 3 V6 M11 2 V5 M16 3 V6" fill="none" stroke="#a0a0a0" stroke-width="1.4"/></svg>
<div style="position:absolute;left:1172px;top:122px;width:18px;height:536px;background:linear-gradient(90deg,#e8e8e8,#f4f4f4 40%,#f0f0f0);"></div>
<div style="position:absolute;left:79px;top:658px;width:1093px;height:18px;background:linear-gradient(#e8e8e8,#f4f4f4 40%,#f0f0f0);"></div>
<svg style="position:absolute;left:1170px;top:120px;" width="22" height="22" viewBox="0 0 22 22"><path d="M7 13 L11 9 L15 13 Z" fill="#808080"/></svg>
<svg style="position:absolute;left:1170px;top:638px;" width="22" height="22" viewBox="0 0 22 22"><path d="M7 9 L11 13 L15 9 Z" fill="#808080"/></svg>
<svg style="position:absolute;left:76px;top:655px;" width="22" height="22" viewBox="0 0 22 22"><path d="M13 7 L9 11 L13 15 Z" fill="#a0a0a0"/></svg>
<svg style="position:absolute;left:1152px;top:655px;" width="22" height="22" viewBox="0 0 22 22"><path d="M9 7 L13 11 L9 15 Z" fill="#808080"/></svg>
<div style="position:absolute;left:0px;top:675px;width:1195px;height:1px;background:#a0a0a0;"></div>
<div style="position:absolute;left:0px;top:676px;width:1366px;height:1px;background:#fff;"></div>
<div style="position:absolute;left:1194px;top:106px;width:1px;height:570px;background:#a0a0a0;"></div>
<div style="position:absolute;left:1195px;top:106px;width:1px;height:570px;background:#a0a0a0;"></div>
<div style="position:absolute;left:1196px;top:106px;width:1px;height:570px;background:#fff;"></div>
<div style="position:absolute;left:1199px;top:115px;width:112px;height:1px;background:#a0a0a0;"></div>
<div style="position:absolute;left:1199px;top:116px;width:112px;height:1px;background:#fff;"></div>
<div style="position:absolute;left:1199px;top:119px;width:112px;height:1px;background:#a0a0a0;"></div>
<div style="position:absolute;left:1199px;top:120px;width:112px;height:1px;background:#fff;"></div>
<div style="position:absolute;left:1314px;top:111px;width:11px;height:11px;background:#f0f0f0;border-right:1px solid #808080;border-bottom:1px solid #808080;border-left:1px solid #fff;border-top:1px solid #fff;"></div>
<div style="position:absolute;left:1317px;top:113px;width:6px;height:6px;border:1px solid #000;border-top:2px solid #000;"></div>
<div style="position:absolute;left:1327px;top:111px;width:12px;height:11px;background:#f0f0f0;border-right:1px solid #808080;border-bottom:1px solid #808080;border-left:1px solid #fff;border-top:1px solid #fff;"></div>
<svg style="position:absolute;left:1329px;top:113px;" width="8" height="7" viewBox="0 0 8 7" shape-rendering="crispEdges"><path d="M1 1 L7 6 M7 1 L1 6" stroke="#000" stroke-width="1.6"/></svg>
<div style="position:absolute;left:1196px;top:124px;width:147px;height:1px;background:#a0a0a0;"></div>
<div style="position:absolute;left:1196px;top:125px;width:147px;height:1px;background:#fff;"></div>
<div style="position:absolute;left:1343px;top:126px;width:1px;height:3px;background:#a0a0a0;"></div>
<div style="position:absolute;left:1195px;top:151px;width:147px;height:1px;background:#8d95a5;"></div>
<div style="position:absolute;left:1341px;top:151px;width:1px;height:6px;background:#8d95a5;"></div>
<div style="position:absolute;left:1196px;top:129px;width:33px;height:25px;background:#fff;border-left:1px solid #8d95a5;border-top:1px solid #8d95a5;border-right:1px solid #8d95a5;"></div>
<div style="position:absolute;left:1197px;top:152px;width:144px;height:2px;background:#fff;"></div>
<svg style="position:absolute;left:1201px;top:132px;" width="14" height="14" viewBox="0 0 14 14" shape-rendering="crispEdges"><rect x="0" y="0" width="14" height="14" fill="#c8c8c8"/><rect x="1" y="1" width="12" height="12" fill="none" stroke="#000080" stroke-width="2"/><rect x="5" y="0" width="4" height="3" fill="#ff0000"/><rect x="5" y="11" width="4" height="3" fill="#ff0000"/><rect x="0" y="5" width="3" height="4" fill="#ff0000"/><rect x="11" y="5" width="3" height="4" fill="#ff0000"/><rect x="5" y="5" width="4" height="4" fill="#fff"/></svg>
<div style="position:absolute;left:1341px;top:154px;width:1px;height:522px;background:#d8d8d8;"></div>
<div style="position:absolute;left:1202px;top:166px;font-size:12px;line-height:1;color:#000;white-space:nowrap;letter-spacing:-0.7px;">Nudge dist.</div>
<div style="position:absolute;left:1202px;top:186px;font-size:12px;line-height:1;color:#000;white-space:nowrap;letter-spacing:-0.6px;">Angle Incr.</div>
<div style="position:absolute;left:1274px;top:161px;width:42px;height:20px;background:#fff;border:1px solid #d5dbe5;border-radius:2px;overflow:hidden;"><div style="position:absolute;left:3px;top:4px;font-size:12px;line-height:1;color:#000;white-space:nowrap;letter-spacing:-0.4px;">200.000</div></div>
<div style="position:absolute;left:1274px;top:182px;width:42px;height:20px;background:#fff;border:1px solid #d5dbe5;border-radius:2px;overflow:hidden;"><div style="position:absolute;left:3px;top:4px;font-size:12px;line-height:1;color:#000;white-space:nowrap;letter-spacing:-0.4px;">90.000</div></div>
<div style="position:absolute;left:1206px;top:207px;width:63px;height:21px;border:1px solid #3c9fd6;border-radius:3px;background:linear-gradient(#f6f6f6 0%,#ebebeb 50%,#dddddd 51%,#cfcfcf 100%);box-shadow:inset 0 0 0 1px #8fd0f3;"><div style="position:absolute;left:0;top:4px;width:100%;text-align:center;font-size:12px;line-height:1;color:#000;letter-spacing:-0.6px;">[Q]Select</div></div>
<div style="position:absolute;left:1273px;top:207px;width:63px;height:21px;border:1px solid #707070;border-radius:3px;background:linear-gradient(#f6f6f6 0%,#ebebeb 50%,#dddddd 51%,#cfcfcf 100%);"><div style="position:absolute;left:0;top:4px;width:100%;text-align:center;font-size:12px;line-height:1;color:#000;letter-spacing:-0.6px;">[R]Lock</div></div>
<div style="position:absolute;left:1206px;top:233px;width:63px;height:21px;border:1px solid #707070;border-radius:3px;background:linear-gradient(#f6f6f6 0%,#ebebeb 50%,#dddddd 51%,#cfcfcf 100%);"><div style="position:absolute;left:0;top:4px;width:100%;text-align:center;font-size:12px;line-height:1;color:#000;letter-spacing:-0.6px;">[W]Display</div></div>
<div style="position:absolute;left:1273px;top:233px;width:63px;height:21px;border:1px solid #707070;border-radius:3px;background:linear-gradient(#f6f6f6 0%,#ebebeb 50%,#dddddd 51%,#cfcfcf 100%);"><div style="position:absolute;left:0;top:4px;width:100%;text-align:center;font-size:12px;line-height:1;color:#000;letter-spacing:-0.6px;">[T]Order</div></div>
<div style="position:absolute;left:1206px;top:259px;width:63px;height:21px;border:1px solid #707070;border-radius:3px;background:linear-gradient(#f6f6f6 0%,#ebebeb 50%,#dddddd 51%,#cfcfcf 100%);"><div style="position:absolute;left:0;top:4px;width:100%;text-align:center;font-size:12px;line-height:1;color:#000;letter-spacing:-0.6px;">[E]Layer</div></div>
<div style="position:absolute;left:1273px;top:259px;width:63px;height:21px;border:1px solid #707070;border-radius:3px;background:linear-gradient(#f6f6f6 0%,#ebebeb 50%,#dddddd 51%,#cfcfcf 100%);"><div style="position:absolute;left:0;top:4px;width:100%;text-align:center;font-size:12px;line-height:1;color:#000;letter-spacing:-0.6px;">[Y]Align</div></div>
<div style="position:absolute;left:1197px;top:287px;width:144px;height:1px;background:#a0a0a0;"></div>
<div style="position:absolute;left:1197px;top:288px;width:144px;height:1px;background:#fff;"></div>
<div style="position:absolute;left:1344px;top:104px;width:1px;height:572px;background:#fff;"></div>
<div style="position:absolute;left:1348px;top:106px;width:17px;height:17px;background:#c8c8c8;border:1px solid #b0b0b0;"></div>
<svg style="position:absolute;left:1349px;top:107px;" width="16" height="16" viewBox="0 0 16 16"><path d="M4 14 L3 10 L11 2 L14 5 L6 13 Z" fill="#ffff00" stroke="#000" stroke-width="1.2"/><path d="M11 2 L14 5 L15 3 L13 1 Z" fill="#ff4040" stroke="#000"/><path d="M3 10 L6 13 L3 15 Z" fill="#000"/></svg>
<div style="position:absolute;left:1348px;top:126px;width:17px;height:17px;background:#fff;border:1px dotted #606060;"></div>
<svg style="position:absolute;left:1350px;top:128px;shape-rendering:auto" width="13" height="13" viewBox="0 0 13 13" shape-rendering="crispEdges"><rect x="0.5" y="0.5" width="12" height="12" fill="none" stroke="#000"/><path d="M0.5 0.5 L12.5 12.5 M12.5 0.5 L0.5 12.5" stroke="#000"/></svg>
<div style="position:absolute;left:1348px;top:145px;width:17px;height:18px;background:#c8c8c8;"></div>
<svg style="position:absolute;left:1348px;top:145px;" width="17" height="18" viewBox="0 0 17 18"><path d="M3 14 L11 6 L13 8 L5 16 Z" fill="#fff" stroke="#000"/><path d="M10 5 L13 2 Q16 2 15 5 L12 8 Z" fill="#000"/><ellipse cx="7" cy="16" rx="6" ry="1.8" fill="#0000ff"/></svg>
<div style="position:absolute;left:1348px;top:166px;width:17px;height:17px;background:#f0f0f0;border:1px solid #000;"></div>
<svg style="position:absolute;left:1349px;top:167px;" width="15" height="15" viewBox="0 0 15 15"><rect x="1" y="1" width="13" height="13" fill="#404040"/><rect x="2" y="2" width="3" height="3" fill="#fff"/><rect x="6" y="2" width="3" height="3" fill="#ff0"/><rect x="2" y="6" width="3" height="3" fill="#0f0"/><rect x="2" y="10" width="3" height="3" fill="#f0f"/><rect x="6" y="10" width="3" height="3" fill="#0ff"/><path d="M4 13 L13 3" stroke="#ffff00" stroke-width="2.5"/><path d="M12 2 L14 1" stroke="#f00" stroke-width="2"/></svg>
<div style="position:absolute;left:1348px;top:185px;width:17px;height:18px;background:#ffc0cb;border:1px solid #404040;"></div>
<div style="position:absolute;left:1348px;top:205px;width:17px;height:17px;background:#f0f0f0;border:1px solid #c0c0c0;"><svg width="15" height="15" style="position:absolute;left:0;top:0"><path d="M3 10 L7.5 6 L12 10 Z" fill="#c0c0c0"/></svg></div>
<div style="position:absolute;left:1348px;top:225px;width:17px;height:17px;background:#f0f0f0;border:1px solid #a0a0a0;"><svg width="15" height="15" style="position:absolute;left:0;top:0"><path d="M3 6 L7.5 10 L12 6 Z" fill="#000"/></svg></div>
<div style="position:absolute;left:1348px;top:245px;width:17px;height:18px;background:#ff0000;border:1px solid #000;"></div>
<div style="position:absolute;left:1348px;top:265px;width:17px;height:18px;background:#ffff00;border:1px solid #000;"></div>
<div style="position:absolute;left:1348px;top:285px;width:17px;height:18px;background:#0000ff;border:1px solid #000;"></div>
<div style="position:absolute;left:1348px;top:305px;width:17px;height:18px;background:#00ff00;border:1px solid #000;"></div>
<div style="position:absolute;left:1348px;top:325px;width:17px;height:18px;background:#00ffff;border:1px solid #000;"></div>
<div style="position:absolute;left:1348px;top:345px;width:17px;height:18px;background:#ff00ff;border:1px solid #000;"></div>
<div style="position:absolute;left:1348px;top:365px;width:17px;height:18px;background:#ffffff;border:1px solid #000;"></div>
<div style="position:absolute;left:1348px;top:385px;width:17px;height:18px;background:#000000;border:1px solid #000;"></div>
<div style="position:absolute;left:1348px;top:405px;width:17px;height:18px;background:#c0c0c0;border:1px solid #000;"></div>
<div style="position:absolute;left:1348px;top:425px;width:17px;height:18px;background:#ff6a20;border:1px solid #000;"></div>
<div style="position:absolute;left:1348px;top:446px;width:17px;height:18px;background:#a52a2a;border:1px solid #000;"></div>
<div style="position:absolute;left:1348px;top:466px;width:17px;height:18px;background:#ffc0cb;border:1px solid #000;"></div>
<div style="position:absolute;left:1348px;top:486px;width:17px;height:18px;background:#3cb371;border:1px solid #000;"></div>
<div style="position:absolute;left:1348px;top:506px;width:17px;height:18px;background:#2f8f8a;border:1px solid #000;"></div>
<div style="position:absolute;left:1348px;top:526px;width:17px;height:18px;background:#ffd700;border:1px solid #000;"></div>
<div style="position:absolute;left:1348px;top:546px;width:17px;height:18px;background:#ffb060;border:1px solid #000;"></div>
<div style="position:absolute;left:1348px;top:566px;width:17px;height:18px;background:#808000;border:1px solid #000;"></div>
<div style="position:absolute;left:1348px;top:586px;width:17px;height:18px;background:#800000;border:1px solid #000;"></div>
<div style="position:absolute;left:1348px;top:606px;width:17px;height:18px;background:#000080;border:1px solid #000;"></div>
<div style="position:absolute;left:1348px;top:626px;width:17px;height:18px;background:#008000;border:1px solid #000;"></div>
<div style="position:absolute;left:1348px;top:646px;width:17px;height:18px;background:#008080;border:1px solid #000;"></div>
<div style="position:absolute;left:1348px;top:666px;width:17px;height:10px;background:#800080;border:1px solid #000;border-bottom:none;"></div>
<div style="position:absolute;left:0px;top:677px;width:3px;height:30px;background:#fff;"></div>
<div style="position:absolute;left:3px;top:678px;width:1px;height:28px;background:#a0a0a0;"></div>
<div style="position:absolute;left:7px;top:678px;width:29px;height:26px;border:1px solid #8a8a8a;border-radius:3px;background:linear-gradient(#e6e6e6,#d2d2d2);box-shadow:inset 1px 1px 2px rgba(0,0,0,0.22);"></div>
<div style="position:absolute;left:65px;top:678px;width:29px;height:26px;border:1px solid #8a8a8a;border-radius:3px;background:linear-gradient(#e6e6e6,#d2d2d2);box-shadow:inset 1px 1px 2px rgba(0,0,0,0.22);"></div>
<div style="position:absolute;left:94px;top:678px;width:29px;height:26px;border:1px solid #8a8a8a;border-radius:3px;background:linear-gradient(#e6e6e6,#d2d2d2);box-shadow:inset 1px 1px 2px rgba(0,0,0,0.22);"></div>
<div style="position:absolute;left:123px;top:678px;width:29px;height:26px;border:1px solid #8a8a8a;border-radius:3px;background:linear-gradient(#e6e6e6,#d2d2d2);box-shadow:inset 1px 1px 2px rgba(0,0,0,0.22);"></div>
<div style="position:absolute;left:152px;top:678px;width:29px;height:26px;border:1px solid #8a8a8a;border-radius:3px;background:linear-gradient(#e6e6e6,#d2d2d2);box-shadow:inset 1px 1px 2px rgba(0,0,0,0.22);"></div>
<div style="position:absolute;left:245px;top:678px;width:29px;height:26px;border:1px solid #8a8a8a;border-radius:3px;background:linear-gradient(#e6e6e6,#d2d2d2);box-shadow:inset 1px 1px 2px rgba(0,0,0,0.22);"></div>
<div style="position:absolute;left:274px;top:678px;width:29px;height:26px;border:1px solid #8a8a8a;border-radius:3px;background:linear-gradient(#e6e6e6,#d2d2d2);box-shadow:inset 1px 1px 2px rgba(0,0,0,0.22);"></div>
<div style="position:absolute;left:241px;top:680px;width:1px;height:23px;background:#a0a0a0;"></div><div style="position:absolute;left:242px;top:680px;width:1px;height:23px;background:#fff;"></div>
<div style="position:absolute;left:305px;top:680px;width:1px;height:23px;background:#a0a0a0;"></div><div style="position:absolute;left:306px;top:680px;width:1px;height:23px;background:#fff;"></div>
<div style="position:absolute;left:398px;top:680px;width:1px;height:23px;background:#a0a0a0;"></div><div style="position:absolute;left:399px;top:680px;width:1px;height:23px;background:#fff;"></div>
<div style="position:absolute;left:462px;top:680px;width:1px;height:23px;background:#a0a0a0;"></div><div style="position:absolute;left:463px;top:680px;width:1px;height:23px;background:#fff;"></div>
<div style="position:absolute;left:526px;top:680px;width:1px;height:23px;background:#a0a0a0;"></div><div style="position:absolute;left:527px;top:680px;width:1px;height:23px;background:#fff;"></div>
<div style="position:absolute;left:646px;top:677px;width:1px;height:29px;background:#a0a0a0;"></div>
<div style="position:absolute;left:0px;top:706px;width:1366px;height:1px;background:#a0a0a0;"></div>
<div style="position:absolute;left:0px;top:707px;width:1366px;height:1px;background:#fff;"></div>
<svg style="position:absolute;left:10px;top:680px;" width="22" height="22" viewBox="0 0 22 22"><path d="M6 16 L16 6" stroke="#000" stroke-width="1.2"/><circle cx="5.5" cy="16.5" r="2" fill="#00ffff" stroke="#a00000" stroke-width="1"/><circle cx="16.5" cy="5.5" r="2" fill="#00ffff" stroke="#a00000" stroke-width="1"/></svg>
<svg style="position:absolute;left:39px;top:680px;" width="22" height="22" viewBox="0 0 22 22"><path d="M3 7 Q10 6 12 11 Q13 16 13 19" fill="none" stroke="#000" stroke-width="1.2"/><path d="M14 9 L19 4 M14 5 V9 H18 M4 19 L9 14 M5 14 H9 V18" fill="none" stroke="#0000ff" stroke-width="1.3"/><circle cx="11.5" cy="11" r="2" fill="#00ffff" stroke="#a00000" stroke-width="1"/></svg>
<svg style="position:absolute;left:68px;top:680px;" width="22" height="22" viewBox="0 0 22 22"><path d="M3 6 Q10 5 12 9 Q14 14 15 19" fill="none" stroke="#000" stroke-width="1.3"/><circle cx="13" cy="9" r="2" fill="#ffff00" stroke="#a00000" stroke-width="1"/></svg>
<svg style="position:absolute;left:98px;top:680px;" width="22" height="22" viewBox="0 0 22 22"><path d="M3 4 L19 18 M19 4 L3 18" stroke="#000" stroke-width="1.2"/><circle cx="11" cy="11" r="2" fill="#00ffff" stroke="#a00000" stroke-width="1"/></svg>
<svg style="position:absolute;left:126px;top:680px;" width="22" height="22" viewBox="0 0 22 22"><path d="M5 17 V5 H10 Q17 6 17 17" fill="none" stroke="#000" stroke-width="1.2" stroke-dasharray="1 0"/><path d="M5 17 H17" stroke="#808080" stroke-dasharray="1 1"/><circle cx="5" cy="17" r="2" fill="#00ffff" stroke="#a00000" stroke-width="1"/></svg>
<svg style="position:absolute;left:156px;top:680px;" width="22" height="22" viewBox="0 0 22 22"><path d="M11 3 L19 11 L11 19 L3 11 Z" fill="none" stroke="#000" stroke-width="1.2"/><circle cx="11" cy="3.5" r="2" fill="#ffff00" stroke="#a00000" stroke-width="1"/><circle cx="18.5" cy="11" r="2" fill="#ffff00" stroke="#a00000" stroke-width="1"/><circle cx="11" cy="18.5" r="2" fill="#ffff00" stroke="#a00000" stroke-width="1"/><circle cx="3.5" cy="11" r="2" fill="#ffff00" stroke="#a00000" stroke-width="1"/></svg>
<svg style="position:absolute;left:184px;top:680px;" width="22" height="22" viewBox="0 0 22 22"><path d="M10 2 V16 M3 16 H19" stroke="#000" stroke-width="1.2"/><path d="M13 10 V16 M10 10 H16" stroke="#808080" stroke-dasharray="1 1"/><circle cx="10" cy="16" r="2" fill="#00ffff" stroke="#a00000" stroke-width="1"/></svg>
<svg style="position:absolute;left:212px;top:680px;" width="22" height="22" viewBox="0 0 22 22"><path d="M2 7 Q10 3 14 12 Q16 16 16 20 M8 4 L21 18" fill="none" stroke="#000" stroke-width="1.2"/><circle cx="13" cy="10.5" r="2" fill="#ff00ff" stroke="#a00000" stroke-width="1"/></svg>
<svg style="position:absolute;left:248px;top:680px;" width="22" height="22" viewBox="0 0 22 22"><rect x="6" y="6" width="10" height="10" rx="3" fill="none" stroke="#000080" stroke-width="1.2"/><circle cx="9" cy="9" r="1.6" fill="#0000ff"/><circle cx="13" cy="9" r="1.6" fill="#ff00ff"/><circle cx="9" cy="13" r="1.6" fill="#ff00ff"/><circle cx="13" cy="13" r="1.6" fill="#0000ff"/></svg>
<svg style="position:absolute;left:277px;top:680px;" width="22" height="22" viewBox="0 0 22 22"><path d="M11 12 V2 M11 12 L3 19 M11 12 L19 19" stroke="#000" stroke-width="1.1"/><circle cx="11" cy="12" r="2" fill="#ff0000" stroke="#a00000" stroke-width="1"/><text x="14" y="6" font-size="6" font-family="Liberation Sans" font-weight="bold">z</text><text x="1" y="18" font-size="6" font-family="Liberation Sans" font-weight="bold">y</text><text x="17" y="18" font-size="6" font-family="Liberation Sans" font-weight="bold">x</text></svg>
<svg style="position:absolute;left:311px;top:680px;" width="22" height="22" viewBox="0 0 22 22"><path d="M2 10 L11 3 L20 10 L11 18 Z M6.5 6.5 L15.5 14 M15.5 6.5 L6.5 14" fill="none" stroke="#000" stroke-width="1.1"/><circle cx="7" cy="8" r="2" fill="#ff00ff" stroke="#a00000" stroke-width="1"/></svg>
<svg style="position:absolute;left:340px;top:680px;" width="22" height="22" viewBox="0 0 22 22"><path d="M2 10 L11 3 L20 10 L11 18 Z M6.5 6.5 L15.5 14 M15.5 6.5 L6.5 14" fill="none" stroke="#000" stroke-width="1.1"/><circle cx="12" cy="5" r="2" fill="#ff00ff" stroke="#a00000" stroke-width="1"/></svg>
<svg style="position:absolute;left:369px;top:680px;" width="22" height="22" viewBox="0 0 22 22"><path d="M2 10 L11 3 L20 10 L11 18 Z M6.5 6.5 L15.5 14 M15.5 6.5 L6.5 14" fill="none" stroke="#000" stroke-width="1.1"/><circle cx="11" cy="11" r="2" fill="#ff00ff" stroke="#a00000" stroke-width="1"/></svg>
<svg style="position:absolute;left:405px;top:680px;" width="22" height="22" viewBox="0 0 22 22"><path d="M6.5 2 V13.5 H15 M3 15.5 H17 M2 17.5 H16 M1 19.5 H15" fill="none" stroke="#000" stroke-width="1" shape-rendering="crispEdges"/><rect x="14" y="12" width="3" height="3" fill="#ffff00" stroke="#c00000"/></svg>
<svg style="position:absolute;left:434px;top:680px;" width="22" height="22" viewBox="0 0 22 22"><path d="M6.5 2 V13.5 H15 M3 15.5 H17 M2 17.5 H16 M1 19.5 H15" fill="none" stroke="#000" stroke-width="1" shape-rendering="crispEdges"/><path d="M19 4 L13 10 M13 6 V10 H17" fill="none" stroke="#0000ff" stroke-width="1.2"/><circle cx="9" cy="13" r="2" fill="#ff00ff" stroke="#a00000" stroke-width="1"/></svg>
<svg style="position:absolute;left:468px;top:680px;" width="22" height="22" viewBox="0 0 22 22"><path d="M4 7 L4 19 L7 16 L10 20 L11.5 19 L9 15 L13 15 Z" fill="#000"/><path d="M10 3 L19 12 M19 3 L10 12" stroke="#000" stroke-width="0.9"/><circle cx="14.5" cy="7.5" r="2" fill="#ffff00" stroke="#a00000" stroke-width="1"/></svg>
<svg style="position:absolute;left:497px;top:680px;" width="22" height="22" viewBox="0 0 22 22"><path d="M4 7 L4 19 L7 16 L10 20 L11.5 19 L9 15 L13 15 Z" fill="#000"/><path d="M12 3 L19 10 M19 3 L12 10" stroke="#ff0000" stroke-width="2.3"/></svg>
<svg style="position:absolute;left:533px;top:680px;" width="22" height="22" viewBox="0 0 22 22"><path d="M2 13 L9 8 L20 13 L12 19 Z" fill="none" stroke="#000" stroke-width="1.1"/><path d="M9 2 V14" stroke="#000" stroke-dasharray="1 1"/><path d="M15 2 V9 M12 6 L15 9 L18 6" fill="none" stroke="#0000ff" stroke-width="1.3"/><rect x="7.5" y="1" width="3" height="3" fill="#fff" stroke="#c00000"/><circle cx="10" cy="14" r="2" fill="#ff00ff" stroke="#a00000" stroke-width="1"/></svg>
<svg style="position:absolute;left:562px;top:680px;" width="22" height="22" viewBox="0 0 22 22"><path d="M3 18 L20 3" stroke="#000" stroke-width="1.1" stroke-dasharray="3 1"/><path d="M10 5 L4 11 M4 7 V11 H8" fill="none" stroke="#0000ff" stroke-width="1.3"/><circle cx="4" cy="18" r="2" fill="#ff00ff" stroke="#a00000" stroke-width="1"/><rect x="12" y="8" width="3" height="3" fill="#fff" stroke="#c00000"/></svg>
<svg style="position:absolute;left:589px;top:680px;" width="22" height="22" viewBox="0 0 22 22"><path d="M2 6 L10 14 M10 6 L2 14" stroke="#000" stroke-width="0.9"/><rect x="10.5" y="5.5" width="9" height="12" fill="#fff" stroke="#000" shape-rendering="crispEdges"/><path d="M12 7.5 H18 M13 9.5 H18 M13 11.5 H18 M13 13.5 H18" stroke="#000" shape-rendering="crispEdges"/><circle cx="6" cy="10" r="2" fill="#ffff00" stroke="#a00000" stroke-width="1"/></svg>
<svg style="position:absolute;left:619px;top:680px;" width="22" height="22" viewBox="0 0 22 22"><path d="M5 5 L17 17 M17 5 L5 17" stroke="#ff0000" stroke-width="3.5"/><path d="M5 5 L17 17 M17 5 L5 17" stroke="#c00000" stroke-width="1"/></svg>
<div style="position:absolute;left:0px;top:708px;width:1366px;height:20px;background:#f0eded;"></div>
<div style="position:absolute;left:2px;top:713px;font-size:13.5px;line-height:1;color:#000;white-space:nowrap;">Select command tool: No selected object</div>
<div style="position:absolute;left:961px;top:709px;width:1px;height:19px;background:#d0cccc;"></div>
<div style="position:absolute;left:966px;top:713px;font-size:12.5px;line-height:1;color:#000;white-space:nowrap;">500.62 13.56 0.00</div>
<div style="position:absolute;left:1149px;top:709px;width:1px;height:19px;background:#d0cccc;"></div>
<div style="position:absolute;left:1177px;top:709px;width:1px;height:19px;background:#d0cccc;"></div>
<div style="position:absolute;left:1154px;top:712px;width:22px;height:14px;background:#f6f6f6;border:1px solid #a8a8a8;border-radius:3px;"><svg width="20" height="12" style="position:absolute;left:0;top:0"><path d="M7 2 V7 Q7 10 10 10 Q13 10 13 7 V2" fill="none" stroke="#707070" stroke-width="2"/></svg></div>
<div style="position:absolute;left:0px;top:728px;width:1366px;height:40px;background:linear-gradient(90deg,#276fa6 0px,#3a8fcc 220px,#3d98d4 430px,#3089cc 650px,#2a7cc6 850px,#2469b4 1000px,#1f5aa5 1120px,#1a4a8a 1220px,#163a6c 1366px);"></div>
<div style="position:absolute;left:0px;top:728px;width:1366px;height:1px;background:#1b2e48;"></div>
<div style="position:absolute;left:0px;top:729px;width:1366px;height:1px;background:rgba(255,255,255,0.35);"></div>
<svg style="position:absolute;left:0px;top:729px;" width="1366" height="39" viewBox="0 0 1366 39"><path d="M895 -2 Q950 14 985 41" fill="none" stroke="rgba(255,255,255,0.42)" stroke-width="5"/></svg>
<div style="position:absolute;left:122px;top:730px;width:58px;height:38px;border:1px solid rgba(20,40,70,0.7);border-radius:3px;background:linear-gradient(rgba(255,255,255,0.45),rgba(255,255,255,0.18) 50%,rgba(255,255,255,0.10) 51%,rgba(255,255,255,0.25));box-shadow:inset 0 0 0 1px rgba(255,255,255,0.5);"></div>
<div style="position:absolute;left:184px;top:730px;width:58px;height:38px;border:1px solid rgba(20,40,70,0.7);border-radius:3px;background:linear-gradient(rgba(255,255,255,0.45),rgba(255,255,255,0.18) 50%,rgba(255,255,255,0.10) 51%,rgba(255,255,255,0.25));box-shadow:inset 0 0 0 1px rgba(255,255,255,0.5);"></div>
<div style="position:absolute;left:308px;top:730px;width:59px;height:38px;border:1px solid rgba(20,40,70,0.7);border-radius:3px;background:linear-gradient(rgba(255,255,255,0.45),rgba(255,255,255,0.18) 50%,rgba(255,255,255,0.10) 51%,rgba(255,255,255,0.25));box-shadow:inset 0 0 0 1px rgba(255,255,255,0.5);"></div>
<div style="position:absolute;left:370px;top:730px;width:59px;height:38px;border:1px solid rgba(20,40,70,0.7);border-radius:3px;background:linear-gradient(rgba(255,255,255,0.45),rgba(255,255,255,0.18) 50%,rgba(255,255,255,0.10) 51%,rgba(255,255,255,0.25));box-shadow:inset 0 0 0 1px rgba(255,255,255,0.5);"></div>
<div style="position:absolute;left:370px;top:730px;width:59px;height:38px;background:rgba(255,255,255,0.25);border-radius:3px;"></div>
<svg style="position:absolute;left:8px;top:729px;" width="40" height="39" viewBox="0 0 40 39"><defs><radialGradient id="orb" cx="50%" cy="80%" r="60%"><stop offset="0" stop-color="#40e0ff"/><stop offset="0.5" stop-color="#1060a0"/><stop offset="1" stop-color="#0a3060"/></radialGradient><linearGradient id="gl" x1="0" y1="0" x2="0" y2="1"><stop offset="0" stop-color="#fff" stop-opacity="0.8"/><stop offset="1" stop-color="#fff" stop-opacity="0.1"/></linearGradient></defs><circle cx="19" cy="19.5" r="18" fill="url(#orb)" stroke="#16406e" stroke-width="1"/><path d="M2 19 Q19 10 36 19 Q36 2 19 2 Q2 2 2 19 Z" fill="url(#gl)"/><path d="M10 11 Q14 9 18 11 L17 19 Q13 17 9 19 Z" fill="#f05020"/><path d="M19 11 Q23 13 28 11 L27 19 Q22 21 18 19 Z" fill="#80c030"/><path d="M9 20 Q13 18 17 20 L16 28 Q12 26 8 28 Z" fill="#30a0e0"/><path d="M18 20 Q22 22 27 20 L26 28 Q21 30 17 28 Z" fill="#ffc020"/></svg>
<svg style="position:absolute;left:72px;top:732px;" width="36" height="34" viewBox="0 0 36 34"><path d="M4 20 Q2 8 16 6 Q30 4 30 15 Q30 24 20 24 Q16 24 14 27 Q10 30 6 26 Z" fill="#d8eef8" stroke="#9ab" stroke-width="0.8"/><circle cx="14" cy="17" r="3" fill="#3a8fcc"/><circle cx="7" cy="18" r="2.5" fill="#e03020"/><circle cx="12" cy="11" r="2.5" fill="#40b040"/><circle cx="19" cy="9" r="2.5" fill="#f0a020"/><path d="M16 31 L29 8" stroke="#e08020" stroke-width="2.5"/><path d="M27 10 L32 2 L34 5 Z" fill="#c0a070"/></svg>
<svg style="position:absolute;left:133px;top:733px;" width="36" height="32" viewBox="0 0 36 32"><path d="M3 6 H13 L15 9 H31 V27 H3 Z" fill="#e8c860"/><rect x="7" y="4" width="20" height="10" fill="#fff"/><rect x="9" y="5" width="4" height="2" fill="#40a040"/><rect x="20" y="7" width="4" height="2" fill="#3080e0"/><path d="M2 12 H32 L30 28 H4 Z" fill="#f6dc80"/><path d="M9 28 V19 H25 V28 H21 V22 H13 V28 Z" fill="#bfe2f4"/></svg>
<svg style="position:absolute;left:196px;top:732px;" width="34" height="34" viewBox="0 0 34 34"><circle cx="17" cy="18" r="9" fill="#fff"/><path d="M25 8 A11.5 11.5 0 1 0 28.5 17" fill="none" stroke="#5aa03c" stroke-width="6.5"/><circle cx="17" cy="18" r="3" fill="#5aa03c"/><path d="M18 3 L19 9 M24 4 L21 10 M29 9 L23 13" stroke="#f07020" stroke-width="2.6" stroke-linecap="round"/></svg>
<svg style="position:absolute;left:258px;top:735px;" width="36" height="28" viewBox="0 0 36 28"><path d="M4 16 Q10 6 24 8 L22 3 L32 10 L22 16 L24 12 Q14 10 9 17 Z" fill="#f0f020" stroke="#b0b000" stroke-width="0.6"/><path d="M32 12 Q26 22 12 20 L14 25 L3 18 L13 12 L12 16 Q22 18 27 11 Z" fill="#2040e0" stroke="#101080" stroke-width="0.6"/></svg>
<svg style="position:absolute;left:316px;top:731px;" width="44" height="36" viewBox="0 0 44 36"><text x="4" y="18" font-family="Liberation Serif" font-style="italic" font-weight="bold" font-size="19" fill="#e02010">DP</text><text x="12" y="26" font-family="Liberation Serif" font-style="italic" font-size="8" fill="#c01010">Desk</text><text x="10" y="34" font-family="Liberation Serif" font-style="italic" font-size="8" fill="#c01010">Proto</text></svg>
<svg style="position:absolute;left:380px;top:731px;" width="40" height="36" viewBox="0 0 40 36"><path d="M3 21 L13 15 L34 21 L34 31 L24 36 L3 29 Z" fill="#3c3c3c" stroke="#111" stroke-width="0.8"/><path d="M3 21 L13 15 L34 21 L24 26 Z" fill="#9a9a9a"/><path d="M24 26 L24 36" stroke="#111" stroke-width="0.8"/><path d="M12 20 L20 17 L25 19 L17 22 Z" fill="#6a6a6a"/><rect x="15" y="2" width="9" height="3" rx="1" fill="#303030"/><rect x="17" y="5" width="5" height="8" fill="#d0d0d0" stroke="#777" stroke-width="0.5"/><rect x="16.5" y="12" width="6" height="9" fill="#e8a020"/><path d="M18 21 H22 V28 L20 30 L18 28 Z" fill="#d8b0f0"/></svg>
<svg style="position:absolute;left:1160px;top:734px;" width="120" height="26" viewBox="0 0 120 26"><path d="M4 17 L8.5 12.5 L13 17 Z" fill="#fff"/><path d="M26.5 4 V22" stroke="#fff" stroke-width="1.5"/><path d="M27.5 5 Q33 3 37 6 L40 8 V14 Q35 11 27.5 13 Z" fill="#fff"/><circle cx="39" cy="18" r="4.5" fill="#e02020" stroke="#fff"/><path d="M37 16 L41 20 M41 16 L37 20" stroke="#fff" stroke-width="1.3"/><rect x="51.5" y="6.5" width="9" height="13" fill="none" stroke="#fff" stroke-width="1.2"/><rect x="50" y="8" width="9" height="13" fill="#1d4a80" stroke="#fff" stroke-width="1.2"/><path d="M57 4 V9 M61 4 V9 M55 9 H63 V13 Q63 16 59 16 Q55 16 55 13 Z M59 16 V22" fill="#fff" stroke="#fff" stroke-width="1"/><path d="M74 20 h2 v-2 h-2z M77 20 h2 v-4 h-2z M80 20 h2 v-7 h-2z M83 20 h2 v-10 h-2z M86 20 h2 v-13 h-2z" fill="#fff"/><path d="M97 10 H101 L106 5 V21 L101 16 H97 Z" fill="#fff"/><path d="M109 10 Q111 13 109 16 M112 8 Q115 13 112 18" fill="none" stroke="#fff" stroke-width="1.3"/></svg>
<div style="position:absolute;left:1292px;top:735px;font-size:12px;line-height:1;color:#fff;white-space:nowrap;">10:22 AM</div>
<div style="position:absolute;left:1290px;top:752px;font-size:12px;line-height:1;color:#fff;white-space:nowrap;">9/30/2018</div>
<div style="position:absolute;left:1352px;top:730px;width:14px;height:38px;border:1px solid rgba(20,30,60,0.8);border-radius:2px;background:linear-gradient(90deg,rgba(255,255,255,0.25),rgba(255,255,255,0.08));box-shadow:inset 1px 1px 0 rgba(255,255,255,0.35);"></div>
<svg style="position:absolute;left:1266px;top:660px;" width="100" height="108" viewBox="0 0 100 108">
<path d="M51.4 29.7 Q54 18 61.5 9.4 Q63 9 62 11 Q57 20 53 31 Z" fill="#e82020"/>
<path d="M53 32 Q59 19 69 11 Q71.5 10 70 13 Q63 22 55 34 Z" fill="#2c4a96"/>
<path d="M55 35 Q60 27 67 22 Q69 21 68 23.5 Q63 30 57 37 Z" fill="#f0901c"/>
<rect x="8" y="27.7" width="32" height="48.7" rx="5" fill="#ee1c24"/>
<path d="M39.5 38 Q35 33 28 33 Q17 33 17 54.5 Q17 76 28 76 Q35 76 39.5 71 L39.5 63 Q36 67 30 67 Q24 67 24 54.5 Q24 42 30 42 Q36 42 39.5 46 Z" fill="#ffffff"/>
<rect x="28.5" y="32" width="1.6" height="11" fill="#ee1c24"/>
<rect x="28.5" y="66" width="1.6" height="11" fill="#ee1c24"/>
<path d="M45 45 L48 45 L65 77 L61 77 Z" fill="#2c4a96"/>
<path d="M47.5 46 L63 76" stroke="#fff" stroke-width="0.8"/>
<rect x="44" y="45" width="2.2" height="32" fill="#2c4a96"/>
<rect x="61" y="37" width="4.5" height="40" fill="#2c4a96"/>
<path d="M48.7 31.5 L50.6 36.1 L55.5 36.3 L51.7 39.4 L53 44.2 L48.7 41.5 L44.4 44.2 L45.7 39.4 L41.9 36.3 L46.8 36.1 Z" fill="#a07c4c"/>
<path d="M90 42 Q87 36 78.5 36 Q68 36 68 56.5 Q68 77 78.5 77 Q87 77 90 70 L85 67 Q83 72 78.5 72 Q73 72 73 56.5 Q73 41 78.5 41 Q83 41 85 46 Z" fill="#f7931e"/>
<rect x="75" y="34" width="1.5" height="9" fill="#efefef"/>
<rect x="75" y="70" width="1.5" height="9" fill="#1f4a80"/>
<rect x="7.4" y="81.2" width="85.3" height="13.5" rx="6.7" fill="#24398a" stroke="#6b7fc0" stroke-width="1"/>
<text x="50" y="92.5" text-anchor="middle" font-family="Liberation Serif" font-weight="bold" font-size="12.5" fill="#fff" letter-spacing="-0.2">Khomaucnc.vn</text>
<rect x="14" y="98.3" width="72" height="1.6" fill="#a08060"/>
</svg>
</body></html>
